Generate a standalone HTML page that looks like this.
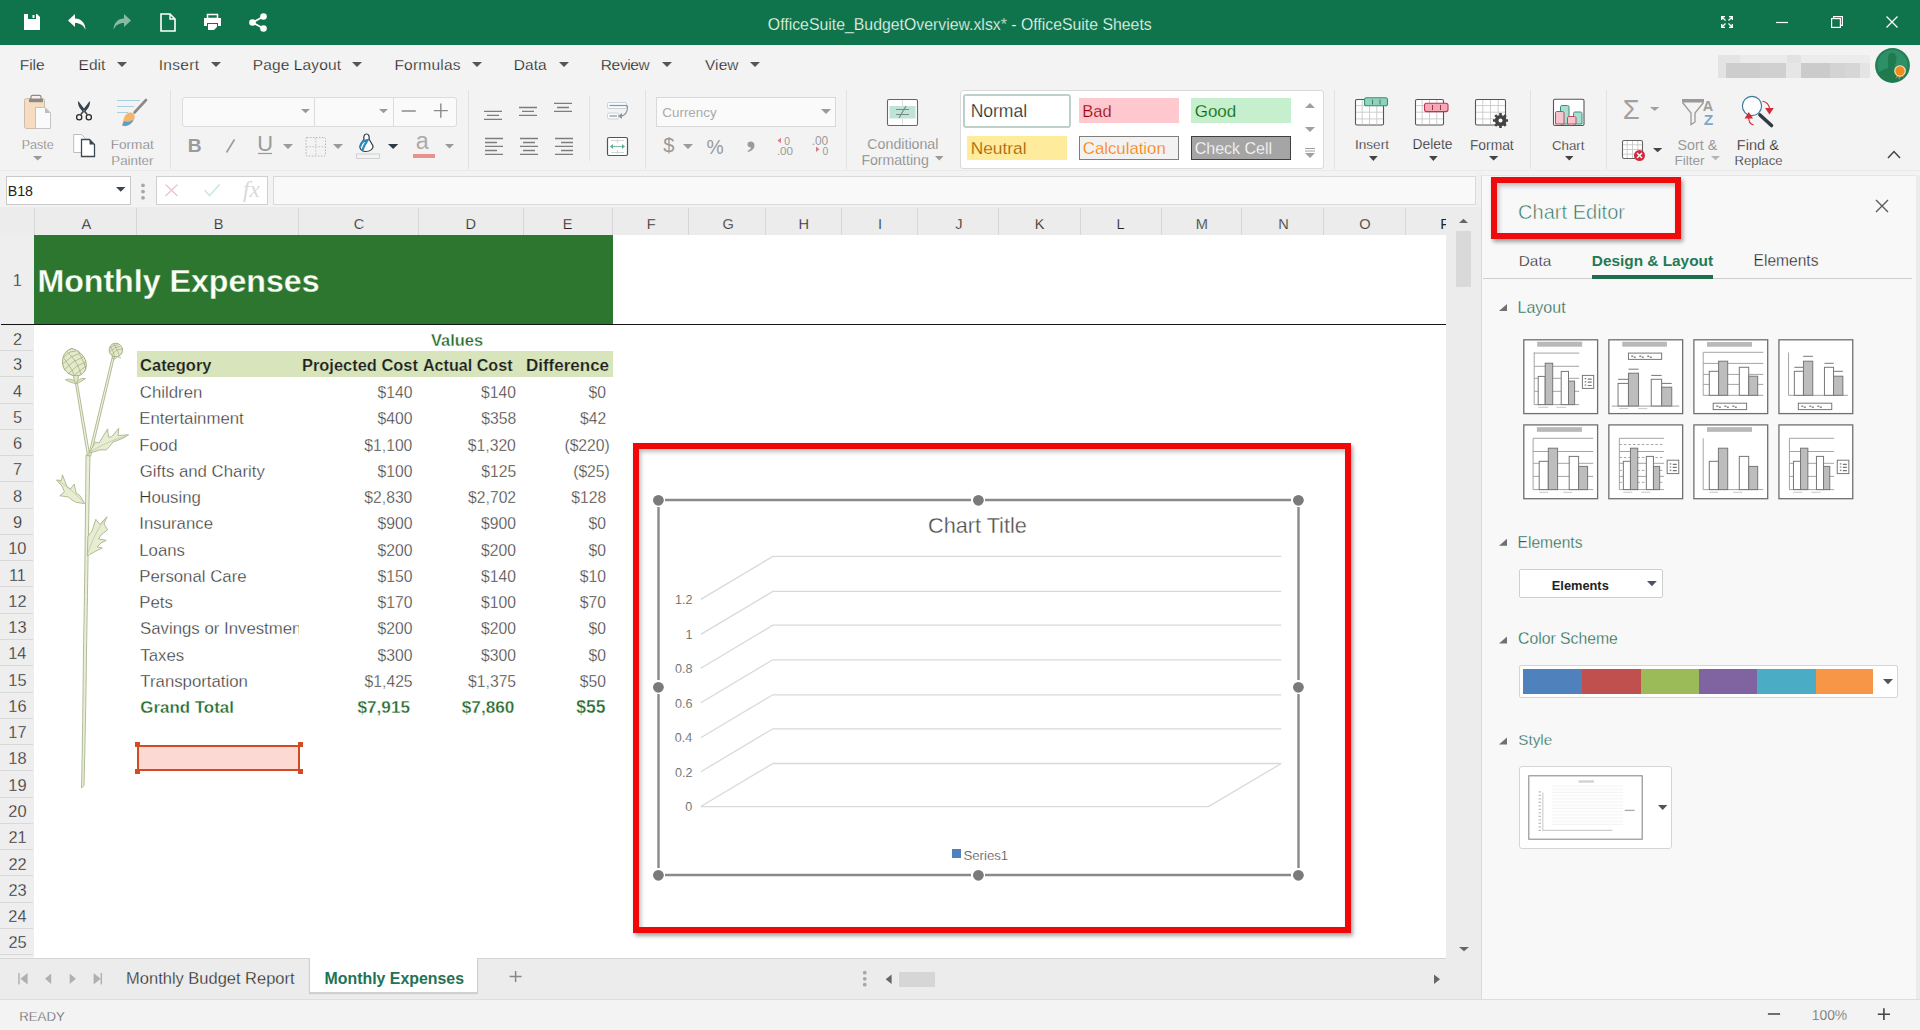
<!DOCTYPE html><html><head><meta charset="utf-8"><title>OfficeSuite Sheets</title><style>
html,body{margin:0;padding:0;width:1920px;height:1030px;overflow:hidden;background:#f3f3f3;font-family:"Liberation Sans",sans-serif;}
body>div,body>svg{position:absolute;box-sizing:border-box;}
svg{overflow:visible}
</style></head><body>
<div style="left:0px;top:0px;width:1920px;height:45px;background:#0f744b"></div>
<svg style="left:24px;top:14px;" width="16" height="16" viewBox="0 0 16 16"><path d="M0 0H13L16 3V16H0Z" fill="#ffffff"/><rect x="4" y="0" width="8" height="5" fill="#0f744b"/><rect x="8.5" y="1" width="2" height="3" fill="#ffffff"/></svg>
<svg style="left:68px;top:14px;" width="18" height="16" viewBox="0 0 18 16"><path d="M7 0L0 6.5L7 13V9C12 9 15.5 11 17.5 16C17.5 9 13 4.5 7 4.5Z" fill="#ffffff"/></svg>
<svg style="left:113px;top:14px;" width="18" height="16" viewBox="0 0 18 16"><path d="M11 0L18 6.5L11 13V9C6 9 2.5 11 0.5 16C0.5 9 5 4.5 11 4.5Z" fill="#ffffff" opacity="0.5"/></svg>
<svg style="left:160px;top:13px;" width="16" height="19" viewBox="0 0 16 19"><path d="M1 1H10L15 6V18H1Z" fill="none" stroke="#ffffff" stroke-width="1.6"/><path d="M10 1V6H15" fill="none" stroke="#ffffff" stroke-width="1.4"/></svg>
<svg style="left:204px;top:14px;" width="17" height="16" viewBox="0 0 17 16"><rect x="3.5" y="0.5" width="10" height="4" fill="none" stroke="#ffffff" stroke-width="1.5"/><path d="M0 4H17V12H14V9H3V12H0Z" fill="#ffffff"/><path d="M4 10H13V13L10 16H4Z" fill="#ffffff"/></svg>
<svg style="left:249px;top:13px;" width="18" height="19" viewBox="0 0 18 19"><circle cx="14.5" cy="3.5" r="3.3" fill="#ffffff"/><circle cx="3.5" cy="9.5" r="3.3" fill="#ffffff"/><circle cx="14.5" cy="15.5" r="3.3" fill="#ffffff"/><path d="M14.5 3.5L3.5 9.5L14.5 15.5" stroke="#ffffff" stroke-width="1.8" fill="none"/></svg>
<svg style="left:1721px;top:16px;" width="12" height="12" viewBox="0 0 12 12"><g stroke="#ffffff" stroke-width="1.3" fill="none"><path d="M0.7 4V0.7H4M0.7 0.7L4.5 4.5"/><path d="M8 0.7H11.3V4M11.3 0.7L7.5 4.5"/><path d="M0.7 8V11.3H4M0.7 11.3L4.5 7.5"/><path d="M11.3 8V11.3H8M11.3 11.3L7.5 7.5"/></g></svg>
<svg style="left:1776px;top:21px;" width="12" height="3" viewBox="0 0 12 3"><path d="M0 1.5H12" stroke="#ffffff" stroke-width="1.2"/></svg>
<svg style="left:1831px;top:16px;" width="12" height="12" viewBox="0 0 12 12"><rect x="0.6" y="2.6" width="8.8" height="8.8" fill="none" stroke="#ffffff" stroke-width="1.2"/><path d="M2.6 2.6V0.6H11.4V9.4H9.4" fill="none" stroke="#ffffff" stroke-width="1.2"/></svg>
<svg style="left:1886px;top:16px;" width="12" height="12" viewBox="0 0 12 12"><path d="M0.5 0.5L11.5 11.5M11.5 0.5L0.5 11.5" stroke="#ffffff" stroke-width="1.3"/></svg>
<svg style="left:0;top:0;pointer-events:none" width="1920" height="1030"><text x="767.86" y="29.50" style="font-size:15.843px;font-weight:400;font-style:normal;font-family:'Liberation Sans';fill:#f2fff8;white-space:pre;stroke:#0f744b;stroke-width:0.25px;">OfficeSuite_BudgetOverview.xlsx* - OfficeSuite Sheets</text></svg>
<div style="left:0px;top:45px;width:1920px;height:126px;background:#f3f3f3"></div>
<svg style="left:117px;top:62px;" width="10" height="5" viewBox="0 0 10 5"><path d="M0 0H10L5.0 5Z" fill="#555"/></svg>
<svg style="left:211px;top:62px;" width="10" height="5" viewBox="0 0 10 5"><path d="M0 0H10L5.0 5Z" fill="#555"/></svg>
<svg style="left:352px;top:62px;" width="10" height="5" viewBox="0 0 10 5"><path d="M0 0H10L5.0 5Z" fill="#555"/></svg>
<svg style="left:471.7px;top:62px;" width="10" height="5" viewBox="0 0 10 5"><path d="M0 0H10L5.0 5Z" fill="#555"/></svg>
<svg style="left:558.7px;top:62px;" width="10" height="5" viewBox="0 0 10 5"><path d="M0 0H10L5.0 5Z" fill="#555"/></svg>
<svg style="left:662px;top:62px;" width="10" height="5" viewBox="0 0 10 5"><path d="M0 0H10L5.0 5Z" fill="#555"/></svg>
<svg style="left:750px;top:62px;" width="10" height="5" viewBox="0 0 10 5"><path d="M0 0H10L5.0 5Z" fill="#555"/></svg>
<div style="left:1718px;top:55px;width:152px;height:23px;background:#ececec"></div>
<div style="left:1718px;top:55px;width:22px;height:8px;background:#e4e4e4"></div>
<div style="left:1740px;top:55px;width:46px;height:8px;background:#ebebeb"></div>
<div style="left:1786.5px;top:55px;width:14.5px;height:8px;background:#e2e2e2"></div>
<div style="left:1801px;top:55px;width:59px;height:8px;background:#ececec"></div>
<div style="left:1718px;top:63px;width:8px;height:15px;background:#e3e3e3"></div>
<div style="left:1726px;top:63px;width:34px;height:15px;background:#cdcdcd"></div>
<div style="left:1760px;top:63px;width:26px;height:15px;background:#d0d0d0"></div>
<div style="left:1786px;top:63px;width:15px;height:15px;background:#e6e6e6"></div>
<div style="left:1801px;top:63px;width:29px;height:15px;background:#cbcbcb"></div>
<div style="left:1830px;top:63px;width:15px;height:15px;background:#d3d3d3"></div>
<div style="left:1845px;top:63px;width:15px;height:15px;background:#d6d6d6"></div>
<div style="left:1860px;top:63px;width:10px;height:15px;background:#e4e4e4"></div>
<svg style="left:1875px;top:48px;" width="35" height="35" viewBox="0 0 35 35"><circle cx="17.5" cy="17.5" r="17.4" fill="#237d55"/><circle cx="17.5" cy="17" r="15" fill="#2f9068"/><path d="M3 26C6 22 10 21 13 20C13.5 16 12.5 12 13 9C13.5 6 15.5 4.5 17.5 4.8C20 5 21.5 7.5 21.5 10.5C21.5 14 20 17 19 20C21 21 23 22 25 24L22 33C18 35 8 34 3 26Z" fill="#1f7a50"/><path d="M20.5 31L22.5 25.5L24.5 32L26 26L28.5 30.5L27.5 24Z" fill="#e07b2a"/><circle cx="25" cy="23" r="5.8" fill="#fbe6c4"/><circle cx="25" cy="23" r="4.7" fill="#f08a1f"/></svg>
<svg style="left:0;top:0;pointer-events:none" width="1920" height="1030"><text x="19.79" y="69.80" style="font-size:15.500px;font-weight:400;font-style:normal;font-family:'Liberation Sans';fill:#1c1c1c;white-space:pre;letter-spacing:-0.045px;stroke:#f3f3f3;stroke-width:0.25px;">File</text><text x="78.59" y="69.80" style="font-size:15.500px;font-weight:400;font-style:normal;font-family:'Liberation Sans';fill:#1c1c1c;white-space:pre;letter-spacing:0.016px;stroke:#f3f3f3;stroke-width:0.25px;">Edit</text><text x="158.79" y="69.80" style="font-size:15.500px;font-weight:400;font-style:normal;font-family:'Liberation Sans';fill:#1c1c1c;white-space:pre;letter-spacing:0.279px;stroke:#f3f3f3;stroke-width:0.25px;">Insert</text><text x="252.79" y="69.80" style="font-size:15.500px;font-weight:400;font-style:normal;font-family:'Liberation Sans';fill:#1c1c1c;white-space:pre;letter-spacing:0.111px;stroke:#f3f3f3;stroke-width:0.25px;">Page Layout</text><text x="394.39" y="69.80" style="font-size:15.500px;font-weight:400;font-style:normal;font-family:'Liberation Sans';fill:#1c1c1c;white-space:pre;letter-spacing:0.214px;stroke:#f3f3f3;stroke-width:0.25px;">Formulas</text><text x="513.79" y="69.80" style="font-size:15.500px;font-weight:400;font-style:normal;font-family:'Liberation Sans';fill:#1c1c1c;white-space:pre;letter-spacing:0.024px;stroke:#f3f3f3;stroke-width:0.25px;">Data</text><text x="600.79" y="69.80" style="font-size:15.500px;font-weight:400;font-style:normal;font-family:'Liberation Sans';fill:#1c1c1c;white-space:pre;letter-spacing:-0.360px;stroke:#f3f3f3;stroke-width:0.25px;">Review</text><text x="705.00" y="69.80" style="font-size:15.500px;font-weight:400;font-style:normal;font-family:'Liberation Sans';fill:#1c1c1c;white-space:pre;letter-spacing:0.065px;stroke:#f3f3f3;stroke-width:0.25px;">View</text></svg>
<div style="left:0px;top:170.3px;width:1920px;height:1px;background:#eaeaea"></div>
<div style="left:170.0px;top:90px;width:1px;height:79px;background:#e2e2e2"></div>
<div style="left:468.0px;top:90px;width:1px;height:79px;background:#e2e2e2"></div>
<div style="left:589.0px;top:96px;width:1px;height:65px;background:#e2e2e2"></div>
<div style="left:645.0px;top:90px;width:1px;height:79px;background:#e2e2e2"></div>
<div style="left:845.5px;top:90px;width:1px;height:79px;background:#e2e2e2"></div>
<div style="left:1333.5px;top:90px;width:1px;height:79px;background:#e2e2e2"></div>
<div style="left:1530.0px;top:90px;width:1px;height:79px;background:#e2e2e2"></div>
<div style="left:1605.5px;top:90px;width:1px;height:79px;background:#e2e2e2"></div>
<svg style="left:0px;top:0px;" width="1" height="1" viewBox="0 0 1 1">
<rect x="24.5" y="98.5" width="20" height="30" rx="2" fill="#f6dcc0" stroke="#cdbca9" stroke-width="1"/>
<rect x="31" y="95.3" width="10" height="5" rx="1.5" fill="none" stroke="#8a8a8a" stroke-width="1.2"/>
<rect x="29" y="99" width="14" height="3.2" fill="#8a8a8a"/>
<path d="M35.5 107.5H45L50.5 113V128.5H35.5Z" fill="#fafafa" stroke="#c4c4c4" stroke-width="1"/>
<path d="M45 107.5V113H50.5Z" fill="#bdbdbd"/>
</svg>
<svg style="left:33.4px;top:156px;" width="9.4" height="4.5" viewBox="0 0 9.4 4.5"><path d="M0 0H9.4L4.7 4.5Z" fill="#9a9a9a"/></svg>
<svg style="left:0px;top:0px;" width="1" height="1" viewBox="0 0 1 1">
<path d="M78.3 101C77.3 104.5 79.5 108.5 83.3 112L85.2 110C82.8 107 80.5 104 78.3 101Z" fill="#34434d"/>
<path d="M89.7 101C90.7 104.5 88.5 108.5 84.7 112L82.8 110C85.2 107 87.5 104 89.7 101Z" fill="#34434d"/>
<rect x="82.3" y="109" width="3.4" height="3.4" fill="#34434d"/><rect x="83.3" y="110" width="1.4" height="1.4" fill="#7a8890"/>
<path d="M82.8 112L80.8 114.5M85.2 112L87.2 114.5" stroke="#34434d" stroke-width="1.5"/>
<circle cx="79.2" cy="117.2" r="2.6" fill="none" stroke="#2b2b2b" stroke-width="1.3"/>
<circle cx="88.8" cy="117.2" r="2.6" fill="none" stroke="#2b2b2b" stroke-width="1.3"/>
</svg>
<svg style="left:0px;top:0px;" width="1" height="1" viewBox="0 0 1 1">
<path d="M73.7 134.5H81.5L85.5 138.5V152.5H73.7Z" fill="#fff" stroke="#bdbdbd" stroke-width="1"/>
<path d="M81.5 139.5H89.5L94.5 144.5V156.5H81.5Z" fill="#fff" stroke="#3d4a55" stroke-width="1.3"/>
<path d="M89.5 139.5V144.5H94.5Z" fill="#3d4a55"/>
</svg>
<svg style="left:0px;top:0px;" width="1" height="1" viewBox="0 0 1 1">
<path d="M117 100.5H140M117 106.5H134M117 112.5H128" stroke="#a9d0e0" stroke-width="1.2"/>
<path d="M146 100L134.5 112.5" stroke="#8a8a8a" stroke-width="2.6" stroke-linecap="round"/>
<path d="M127 113.5C131 111 136 114 134.5 118.5C132.5 124 124 126 122 125.5C123.5 122 123 117 127 113.5Z" fill="#f5b56e"/>
<path d="M122.3 125.5C124 126 131 124 133.2 120.5C132 123.5 129 125.5 125 126.3Z" fill="#5a9fc9"/>
<path d="M124 121C126 122.5 130 122 133.5 119.5C132.5 123.5 127 126 122.2 125.6C123 124 123.3 122.5 124 121Z" fill="#5a9fc9"/>
</svg>
<div style="left:182px;top:97px;width:275px;height:29.5px;background:#fafafa;border:1px solid #dcdcdc;border-radius:3px"></div>
<div style="left:313.5px;top:98px;width:1px;height:28px;background:#dcdcdc"></div>
<div style="left:392.5px;top:98px;width:1px;height:28px;background:#dcdcdc"></div>
<svg style="left:300.6px;top:109px;" width="9" height="4.3" viewBox="0 0 9 4.3"><path d="M0 0H9L4.5 4.3Z" fill="#9a9a9a"/></svg>
<svg style="left:379px;top:109px;" width="9" height="4.3" viewBox="0 0 9 4.3"><path d="M0 0H9L4.5 4.3Z" fill="#9a9a9a"/></svg>
<svg style="left:0px;top:0px;" width="1" height="1" viewBox="0 0 1 1"><path d="M401.7 111H415.8M433.8 110.6H447.8M440.8 103.6V117.7" stroke="#8a8a8a" stroke-width="1.4"/></svg>
<svg style="left:0px;top:0px;" width="1" height="1" viewBox="0 0 1 1"><path d="M234.5 139.5L226.5 152.5" stroke="#9a9a9a" stroke-width="1.6"/></svg>
<svg style="left:0px;top:0px;" width="1" height="1" viewBox="0 0 1 1"><path d="M258 153.5H272" stroke="#9a9a9a" stroke-width="1.2"/></svg>
<svg style="left:283px;top:144px;" width="10" height="5" viewBox="0 0 10 5"><path d="M0 0H10L5.0 5Z" fill="#9a9a9a"/></svg>
<svg style="left:0px;top:0px;" width="1" height="1" viewBox="0 0 1 1"><rect x="306" y="137.5" width="19.5" height="18.5" rx="1" fill="none" stroke="#b5b5b5" stroke-width="1" stroke-dasharray="1.5 1.5"/><path d="M315.75 138V155.5M306.5 146.75H325" stroke="#c5c5c5" stroke-width="1" stroke-dasharray="1.5 1.5"/></svg>
<svg style="left:333px;top:144px;" width="10" height="5" viewBox="0 0 10 5"><path d="M0 0H10L5.0 5Z" fill="#9a9a9a"/></svg>
<svg style="left:0px;top:0px;" width="1" height="1" viewBox="0 0 1 1">
<path d="M366.5 134C364 134 363.5 137 364 139L360 146C359.5 148 361 151.5 365.5 151.5C370 151.5 373.5 149 373 146L369 139C369.5 137 369 134 366.5 134Z" fill="#fff" stroke="#2b3a45" stroke-width="1.2"/>
<path d="M360.3 146.5C361 142.5 364 140.5 367.5 140.2C366 142.5 364 146 362 151" stroke="#2a8ab8" stroke-width="2.2" fill="none"/>
<rect x="356.5" y="154" width="23" height="4.5" fill="none" stroke="#cfcfcf" stroke-width="1"/>
</svg>
<svg style="left:387.7px;top:144px;" width="10.3" height="5" viewBox="0 0 10.3 5"><path d="M0 0H10.3L5.15 5Z" fill="#2b3a45"/></svg>
<div style="left:412.7px;top:154px;width:22.3px;height:4px;background:#e8928e"></div>
<svg style="left:444.7px;top:144px;" width="9" height="4.5" viewBox="0 0 9 4.5"><path d="M0 0H9L4.5 4.5Z" fill="#9a9a9a"/></svg>
<svg style="left:0px;top:0px;" width="1" height="1" viewBox="0 0 1 1"><path d="M484 111.4H502M487 115.4H499M484 119.3H502" stroke="#7d7d7d" stroke-width="1.3"/></svg>
<svg style="left:0px;top:0px;" width="1" height="1" viewBox="0 0 1 1"><path d="M519 107.5H537M522 111.4H534M519 115.4H537" stroke="#7d7d7d" stroke-width="1.3"/></svg>
<svg style="left:0px;top:0px;" width="1" height="1" viewBox="0 0 1 1"><path d="M554 103.4H572M557 107.5H569M554 111.4H572" stroke="#7d7d7d" stroke-width="1.3"/></svg>
<svg style="left:0px;top:0px;" width="1" height="1" viewBox="0 0 1 1"><path d="M485 138.5H503M485 142.5H497M485 146.3H503M485 150.5H497M485 154.4H503" stroke="#7d7d7d" stroke-width="1.3"/></svg>
<svg style="left:0px;top:0px;" width="1" height="1" viewBox="0 0 1 1"><path d="M520 138.5H538M523 142.5H535M520 146.3H538M523 150.5H535M520 154.4H538" stroke="#7d7d7d" stroke-width="1.3"/></svg>
<svg style="left:0px;top:0px;" width="1" height="1" viewBox="0 0 1 1"><path d="M555 138.5H573M561 142.5H573M555 146.3H573M561 150.5H573M555 154.4H573" stroke="#7d7d7d" stroke-width="1.3"/></svg>
<svg style="left:0px;top:0px;" width="1" height="1" viewBox="0 0 1 1">
<rect x="607.5" y="102.5" width="19" height="6" rx="1.5" fill="#fbfbfb" stroke="#c9d3da" stroke-width="1"/>
<path d="M609.5 105.5H627" stroke="#8896a0" stroke-width="1.2"/>
<rect x="607.5" y="113" width="11" height="6" rx="1.5" fill="#fbfbfb" stroke="#c9d3da" stroke-width="1"/>
<path d="M609.5 116H617" stroke="#8896a0" stroke-width="1.2"/>
<path d="M627.5 105.5C628 112 625 116 620.5 116" stroke="#8896a0" stroke-width="1.2" fill="none"/>
<path d="M618 116L622 113V119Z" fill="#8896a0"/>
<rect x="607.5" y="137.5" width="20" height="18" rx="1.5" fill="#fff" stroke="#555" stroke-width="1.2"/>
<path d="M611 140.5H624M611 152.5H624M617.5 139V143M617.5 150V154" stroke="#d0d8d4" stroke-width="1"/>
<path d="M610.5 146.5H624.5" stroke="#7fbfa8" stroke-width="1.2"/>
<path d="M610 146.5L613 144V149Z M625 146.5L622 144V149Z" fill="#6aae95"/>
</svg>
<div style="left:656px;top:97px;width:180px;height:29.7px;background:#fafafa;border:1px solid #d8d8d8"></div>
<svg style="left:821px;top:109px;" width="10" height="5" viewBox="0 0 10 5"><path d="M0 0H10L5.0 5Z" fill="#9a9a9a"/></svg>
<svg style="left:683px;top:144px;" width="10" height="5" viewBox="0 0 10 5"><path d="M0 0H10L5.0 5Z" fill="#9a9a9a"/></svg>
<svg style="left:0px;top:0px;" width="1" height="1" viewBox="0 0 1 1"><path d="M750.5 141.5C753 141.5 754.5 143 754.5 145.5C754.5 148.5 752 151 748 152L747.5 151C749.5 150 750.8 148.8 751 147.5C749 147.5 747.5 146.3 747.5 144.5C747.5 142.7 748.8 141.5 750.5 141.5Z" fill="#9a9a9a"/></svg>
<svg style="left:0px;top:0px;" width="1" height="1" viewBox="0 0 1 1"><path d="M777.5 140.5L781 137.8V143.2Z" fill="#d9798a"/><path d="M819.5 149.3L816 146.6V152Z" fill="#d9798a"/></svg>
<svg style="left:0px;top:0px;" width="1" height="1" viewBox="0 0 1 1">
<rect x="887.5" y="99.5" width="30" height="26" rx="1.5" fill="#fff" stroke="#666" stroke-width="1.1"/>
<rect x="889.5" y="106" width="26" height="12.5" fill="#bfe3d8"/>
<path d="M896 109.5H909M896 114.5H909M906 106L899 118" stroke="#7a8a86" stroke-width="1.2"/>
<path d="M902.5 100V106M902.5 118.5V125" stroke="#d6d6d6" stroke-width="0.8"/>
</svg>
<svg style="left:934.7px;top:156px;" width="8.5" height="4.5" viewBox="0 0 8.5 4.5"><path d="M0 0H8.5L4.25 4.5Z" fill="#9a9a9a"/></svg>
<div style="left:959.5px;top:90.3px;width:364px;height:79px;background:#fff;border:1px solid #dadada;border-radius:3px"></div>
<div style="left:963px;top:93.5px;width:108.4px;height:34px;background:#fff;border:2.5px solid #bcd2c8;border-radius:3px"></div>
<div style="left:1079px;top:98px;width:100px;height:24.5px;background:#ffc7ce"></div>
<div style="left:1191px;top:98px;width:100px;height:24.5px;background:#c6efce"></div>
<div style="left:967px;top:135.5px;width:99.8px;height:24.5px;background:#ffeb9c"></div>
<div style="left:1079px;top:135.5px;width:100px;height:24.5px;background:#f2f2f2;border:1px solid #7f7f7f"></div>
<div style="left:1191px;top:135.5px;width:100px;height:24.5px;background:#a5a5a5;border:1.5px solid #3f3f3f"></div>
<svg style="left:0px;top:0px;" width="1" height="1" viewBox="0 0 1 1"><path d="M1305 108H1315L1310 103Z" fill="#a0a0a0"/><path d="M1305 127H1315L1310 132Z" fill="#a0a0a0"/><path d="M1305 148.5H1315M1305 151H1315" stroke="#a0a0a0" stroke-width="1"/><path d="M1305 153H1315L1310 158Z" fill="#a0a0a0"/></svg>
<svg style="left:0px;top:0px;" width="1" height="1" viewBox="0 0 1 1"><rect x="1355.5" y="99.5" width="28" height="25.5" rx="1.5" fill="#fff" stroke="#555" stroke-width="1.1"/><path d="M1362.2 100V124.5M1369.5 100V124.5M1376.8 100V124.5M1356 105.6H1383M1356 112.2H1383M1356 118.9H1383" stroke="#c8c8c8" stroke-width="0.9"/><rect x="1364.5" y="97.8" width="23" height="8" rx="2" fill="#8fd3bf" stroke="#3b8f73" stroke-width="1.1"/><path d="M1372.5 99.5V104.5M1380 99.5V104.5" stroke="#3b6f5f" stroke-width="0.9"/></svg>
<svg style="left:1369px;top:155.9px;" width="8.7" height="4.9" viewBox="0 0 8.7 4.9"><path d="M0 0H8.7L4.35 4.9Z" fill="#444"/></svg>
<svg style="left:0px;top:0px;" width="1" height="1" viewBox="0 0 1 1"><rect x="1415.5" y="99.5" width="28" height="25.5" rx="1.5" fill="#fff" stroke="#555" stroke-width="1.1"/><path d="M1422.2 100V124.5M1429.5 100V124.5M1436.8 100V124.5M1416 105.6H1443M1416 112.2H1443M1416 118.9H1443" stroke="#c8c8c8" stroke-width="0.9"/><rect x="1424.5" y="103.3" width="23.5" height="8.3" rx="2" fill="#f5a9b6" stroke="#c2324a" stroke-width="1.1"/><path d="M1432.5 105V110M1440.5 105V110" stroke="#8a3040" stroke-width="0.9"/></svg>
<svg style="left:1428.5px;top:155.9px;" width="8.7" height="4.9" viewBox="0 0 8.7 4.9"><path d="M0 0H8.7L4.35 4.9Z" fill="#444"/></svg>
<svg style="left:0px;top:0px;" width="1" height="1" viewBox="0 0 1 1"><rect x="1475.5" y="99.5" width="30" height="25.5" rx="1.5" fill="#fff" stroke="#555" stroke-width="1.1"/><path d="M1482.8 100V124.5M1490.5 100V124.5M1498.2 100V124.5M1476 105.6H1505M1476 112.2H1505M1476 118.9H1505" stroke="#c8c8c8" stroke-width="0.9"/>
<g transform="translate(1500.5 120.5)"><circle r="5.6" fill="#444"/><circle r="2" fill="#fff"/>
<path d="M0 -7.5V7.5M-7.5 0H7.5M-5.3 -5.3L5.3 5.3M5.3 -5.3L-5.3 5.3" stroke="#444" stroke-width="2.6"/><circle r="2" fill="#fff"/></g></svg>
<svg style="left:1488.75px;top:156px;" width="9.3" height="4.5" viewBox="0 0 9.3 4.5"><path d="M0 0H9.3L4.65 4.5Z" fill="#444"/></svg>
<svg style="left:0px;top:0px;" width="1" height="1" viewBox="0 0 1 1">
<rect x="1553.5" y="99.2" width="30.5" height="26.3" rx="1.5" fill="#fff" stroke="#555" stroke-width="1.1"/>
<path d="M1560.5 124V107C1560.5 106 1561 105.5 1562 105.5H1567.5C1568.5 105.5 1569 106 1569 107V124Z" fill="#a9dfd2" stroke="#3c8f77" stroke-width="1"/>
<path d="M1555.5 124V113C1555.5 112 1556 111.5 1557 111.5H1562.5C1563.5 111.5 1564 112 1564 113V124Z" fill="#f7c5cd" stroke="#c0485a" stroke-width="1"/>
<path d="M1573.5 124V113.5C1573.5 112.5 1574 112 1575 112H1580.5C1581.5 112 1582 112.5 1582 113.5V124Z" fill="#a9dfd2" stroke="#3c8f77" stroke-width="1"/>
<path d="M1567.5 124V118C1567.5 117 1568 116.5 1569 116.5H1574.5C1575.5 116.5 1576 117 1576 118V124Z" fill="#f7c5cd" stroke="#c0485a" stroke-width="1"/>
</svg>
<svg style="left:1564.5px;top:156px;" width="8.5" height="4.5" viewBox="0 0 8.5 4.5"><path d="M0 0H8.5L4.25 4.5Z" fill="#444"/></svg>
<svg style="left:1649.5px;top:107px;" width="9.3" height="4" viewBox="0 0 9.3 4"><path d="M0 0H9.3L4.65 4Z" fill="#a0a0a0"/></svg>
<svg style="left:0px;top:0px;" width="1" height="1" viewBox="0 0 1 1"><rect x="1622.5" y="140.5" width="20" height="18" rx="1.5" fill="#fff" stroke="#666" stroke-width="1.1"/><path d="M1627.2 141V158M1632.5 141V158M1637.8 141V158M1623 144.8H1642M1623 149.5H1642M1623 154.2H1642" stroke="#c8c8c8" stroke-width="0.9"/><circle cx="1639.5" cy="155.5" r="5.5" fill="#d22a3f"/><path d="M1637 153L1642 158M1642 153L1637 158" stroke="#fff" stroke-width="1.4"/></svg>
<svg style="left:1652.5px;top:147.5px;" width="9.3" height="4.3" viewBox="0 0 9.3 4.3"><path d="M0 0H9.3L4.65 4.3Z" fill="#444"/></svg>
<svg style="left:0px;top:0px;" width="1" height="1" viewBox="0 0 1 1">
<rect x="1682" y="99" width="22" height="3.5" fill="#9a9a9a"/>
<path d="M1682.5 102.5L1691 113V124.5L1695 122V113L1703.5 102.5" fill="none" stroke="#9a9a9a" stroke-width="1.3"/>
</svg>
<svg style="left:1710.5px;top:156px;" width="9" height="4.3" viewBox="0 0 9 4.3"><path d="M0 0H9L4.5 4.3Z" fill="#b5b5b5"/></svg>
<svg style="left:0px;top:0px;" width="1" height="1" viewBox="0 0 1 1">
<circle cx="1752" cy="106" r="9.6" fill="#fbfdfe" stroke="#3a7596" stroke-width="1.1"/>
<path d="M1760 115L1771.5 125.5" stroke="#2f3a42" stroke-width="3.6" stroke-linecap="round"/>
<path d="M1753.5 125C1750 124 1748.5 121.5 1748.8 117.5" fill="none" stroke="#d42a3a" stroke-width="1.1"/>
<path d="M1744.5 118.5L1748.8 112L1753 118.5Z" fill="#d42a3a"/>
<path d="M1762.5 101.2C1766.5 102 1769 104.5 1769.5 108.5" fill="none" stroke="#d42a3a" stroke-width="1.1"/>
<path d="M1765 108L1769.5 114.5L1773.8 108Z" fill="#d42a3a"/>
</svg>
<svg style="left:0px;top:0px;" width="1" height="1" viewBox="0 0 1 1"><path d="M1888 158L1894 151.5L1900 158" fill="none" stroke="#444" stroke-width="1.5"/></svg>
<svg style="left:0;top:0;pointer-events:none" width="1920" height="1030"><text x="21.72" y="148.80" style="font-size:12.549px;font-weight:400;font-style:normal;font-family:'Liberation Sans';fill:#7a7a7a;white-space:pre;stroke:#f3f3f3;stroke-width:0.25px;">Paste</text><text x="110.74" y="148.80" style="font-size:13.582px;font-weight:400;font-style:normal;font-family:'Liberation Sans';fill:#7a7a7a;white-space:pre;stroke:#f3f3f3;stroke-width:0.25px;">Format</text><text x="111.26" y="164.50" style="font-size:13.321px;font-weight:400;font-style:normal;font-family:'Liberation Sans';fill:#7a7a7a;white-space:pre;stroke:#f3f3f3;stroke-width:0.25px;">Painter</text><text x="187.80" y="152.40" style="font-size:19.200px;font-weight:700;font-style:normal;font-family:'Liberation Sans';fill:#9a9a9a;white-space:pre;">B</text><text x="257.13" y="151.00" style="font-size:21.895px;font-weight:400;font-style:normal;font-family:'Liberation Sans';fill:#9a9a9a;white-space:pre;">U</text><text x="415.87" y="149.00" style="font-size:23.341px;font-weight:400;font-style:normal;font-family:'Liberation Sans';fill:#ababab;white-space:pre;">a</text><text x="662.37" y="117.00" style="font-size:13.392px;font-weight:400;font-style:normal;font-family:'Liberation Sans';fill:#ababab;white-space:pre;">Currency</text><text x="663.30" y="152.00" style="font-size:20.114px;font-weight:400;font-style:normal;font-family:'Liberation Sans';fill:#9a9a9a;white-space:pre;">$</text><text x="706.40" y="153.50" style="font-size:19.321px;font-weight:400;font-style:normal;font-family:'Liberation Sans';fill:#9a9a9a;white-space:pre;">%</text><text x="784.17" y="144.50" style="font-size:10.400px;font-weight:400;font-style:normal;font-family:'Liberation Sans';fill:#9a9a9a;white-space:pre;">0</text><text x="776.89" y="155.00" style="font-size:11.654px;font-weight:400;font-style:normal;font-family:'Liberation Sans';fill:#9a9a9a;white-space:pre;">.00</text><text x="811.67" y="144.50" style="font-size:11.887px;font-weight:400;font-style:normal;font-family:'Liberation Sans';fill:#9a9a9a;white-space:pre;">.00</text><text x="822.47" y="155.00" style="font-size:10.400px;font-weight:400;font-style:normal;font-family:'Liberation Sans';fill:#9a9a9a;white-space:pre;">0</text><text x="867.33" y="149.00" style="font-size:14.211px;font-weight:400;font-style:normal;font-family:'Liberation Sans';fill:#7a7a7a;white-space:pre;stroke:#f3f3f3;stroke-width:0.25px;">Conditional</text><text x="861.40" y="164.70" style="font-size:14.101px;font-weight:400;font-style:normal;font-family:'Liberation Sans';fill:#7a7a7a;white-space:pre;stroke:#f3f3f3;stroke-width:0.25px;">Formatting</text><text x="970.63" y="116.60" style="font-size:17.540px;font-weight:400;font-style:normal;font-family:'Liberation Sans';fill:#1e1e1e;white-space:pre;stroke:#fff;stroke-width:0.25px;">Normal</text><text x="1082.31" y="116.60" style="font-size:16.535px;font-weight:400;font-style:normal;font-family:'Liberation Sans';fill:#9c0006;white-space:pre;stroke:#ffc7ce;stroke-width:0.25px;">Bad</text><text x="1194.70" y="116.60" style="font-size:16.985px;font-weight:400;font-style:normal;font-family:'Liberation Sans';fill:#006100;white-space:pre;stroke:#c6efce;stroke-width:0.25px;">Good</text><text x="970.65" y="153.70" style="font-size:17.340px;font-weight:400;font-style:normal;font-family:'Liberation Sans';fill:#9c5700;white-space:pre;stroke:#ffeb9c;stroke-width:0.25px;">Neutral</text><text x="1082.81" y="153.70" style="font-size:16.783px;font-weight:400;font-style:normal;font-family:'Liberation Sans';fill:#fa7d00;white-space:pre;stroke:#f2f2f2;stroke-width:0.25px;">Calculation</text><text x="1194.75" y="153.70" style="font-size:16.010px;font-weight:400;font-style:normal;font-family:'Liberation Sans';fill:#ffffff;white-space:pre;stroke:#a5a5a5;stroke-width:0.25px;">Check Cell</text><text x="1354.94" y="149.00" style="font-size:13.601px;font-weight:400;font-style:normal;font-family:'Liberation Sans';fill:#1e1e1e;white-space:pre;stroke:#f3f3f3;stroke-width:0.25px;">Insert</text><text x="1412.62" y="149.00" style="font-size:13.817px;font-weight:400;font-style:normal;font-family:'Liberation Sans';fill:#1e1e1e;white-space:pre;stroke:#f3f3f3;stroke-width:0.25px;">Delete</text><text x="1469.92" y="149.50" style="font-size:13.825px;font-weight:400;font-style:normal;font-family:'Liberation Sans';fill:#1e1e1e;white-space:pre;stroke:#f3f3f3;stroke-width:0.25px;">Format</text><text x="1551.88" y="149.50" style="font-size:13.323px;font-weight:400;font-style:normal;font-family:'Liberation Sans';fill:#1e1e1e;white-space:pre;stroke:#f3f3f3;stroke-width:0.25px;">Chart</text><text x="1622.71" y="118.75" style="font-size:27.429px;font-weight:400;font-style:normal;font-family:'Liberation Sans';fill:#a0a0a0;white-space:pre;">&#931;</text><text x="1702.77" y="110.50" style="font-size:14.545px;font-weight:700;font-style:normal;font-family:'Liberation Sans';fill:#a0a0a0;white-space:pre;">A</text><text x="1703.76" y="124.50" style="font-size:15.568px;font-weight:700;font-style:normal;font-family:'Liberation Sans';fill:#7da7cf;white-space:pre;">Z</text><text x="1677.55" y="149.50" style="font-size:14.250px;font-weight:400;font-style:normal;font-family:'Liberation Sans';fill:#9a9a9a;white-space:pre;">Sort &amp;</text><text x="1674.44" y="165.00" style="font-size:13.557px;font-weight:400;font-style:normal;font-family:'Liberation Sans';fill:#9a9a9a;white-space:pre;">Filter</text><text x="1736.86" y="149.50" style="font-size:14.547px;font-weight:400;font-style:normal;font-family:'Liberation Sans';fill:#1e1e1e;white-space:pre;stroke:#f3f3f3;stroke-width:0.25px;">Find &amp;</text><text x="1734.48" y="165.00" style="font-size:13.098px;font-weight:400;font-style:normal;font-family:'Liberation Sans';fill:#1e1e1e;white-space:pre;stroke:#f3f3f3;stroke-width:0.25px;">Replace</text></svg>
<div style="left:6px;top:175.5px;width:125px;height:29px;background:#fff;border:1px solid #cacaca"></div>
<svg style="left:0px;top:0px;" width="1" height="1" viewBox="0 0 1 1"><path d="M116 187H125.5L120.75 191.8Z" fill="#3c4650"/></svg>
<svg style="left:0px;top:0px;" width="1" height="1" viewBox="0 0 1 1"><circle cx="143" cy="185.3" r="1.9" fill="#a8a8a8"/><circle cx="143" cy="191.6" r="1.9" fill="#a8a8a8"/><circle cx="143" cy="197.8" r="1.9" fill="#a8a8a8"/></svg>
<div style="left:156px;top:175.5px;width:112px;height:29px;background:#fff;border:1px solid #cfcfcf"></div>
<svg style="left:0px;top:0px;" width="1" height="1" viewBox="0 0 1 1"><path d="M165.5 184.5L177.5 196M177.5 184.5L165.5 196" stroke="#efc3ca" stroke-width="1.3"/><path d="M204.5 190L209.5 195.8L219.5 184.5" fill="none" stroke="#c9e5d9" stroke-width="1.4"/></svg>
<div style="left:273px;top:175.5px;width:1203px;height:29px;background:#f9f9f9;border:1px solid #d9d9d9"></div>
<div style="left:1476px;top:171px;width:5.5px;height:36px;background:#f0f0f0"></div>
<div style="left:0px;top:207px;width:1446px;height:28px;background:#ececec"></div>
<div style="left:135.75px;top:208px;width:1px;height:27px;background:#d6d6d6"></div>
<div style="left:298.25px;top:208px;width:1px;height:27px;background:#d6d6d6"></div>
<div style="left:417.9px;top:208px;width:1px;height:27px;background:#d6d6d6"></div>
<div style="left:522.5px;top:208px;width:1px;height:27px;background:#d6d6d6"></div>
<div style="left:612.3px;top:208px;width:1px;height:27px;background:#d6d6d6"></div>
<div style="left:688.0px;top:208px;width:1px;height:27px;background:#d6d6d6"></div>
<div style="left:764.9px;top:208px;width:1px;height:27px;background:#d6d6d6"></div>
<div style="left:841.2px;top:208px;width:1px;height:27px;background:#d6d6d6"></div>
<div style="left:917.0px;top:208px;width:1px;height:27px;background:#d6d6d6"></div>
<div style="left:998.25px;top:208px;width:1px;height:27px;background:#d6d6d6"></div>
<div style="left:1080.3px;top:208px;width:1px;height:27px;background:#d6d6d6"></div>
<div style="left:1160.5px;top:208px;width:1px;height:27px;background:#d6d6d6"></div>
<div style="left:1241.2px;top:208px;width:1px;height:27px;background:#d6d6d6"></div>
<div style="left:1323.25px;top:208px;width:1px;height:27px;background:#d6d6d6"></div>
<div style="left:1404.5px;top:208px;width:1px;height:27px;background:#d6d6d6"></div>
<div style="left:1489.5px;top:208px;width:1px;height:27px;background:#d6d6d6"></div>
<div style="left:33.5px;top:208px;width:1px;height:27px;background:#d6d6d6"></div>
<div style="left:0px;top:234.5px;width:1446px;height:1px;background:#dcdcdc"></div>
<svg style="left:0;top:0;pointer-events:none" width="1920" height="1030"><text x="7.69" y="195.80" style="font-size:14.211px;font-weight:400;font-style:normal;font-family:'Liberation Sans';fill:#222;white-space:pre;">B18</text><text x="243.00" y="196.50" style="font-size:23.066px;font-weight:400;font-style:italic;font-family:'Liberation Serif';fill:#d9d9d9;white-space:pre;">fx</text><text x="1440.37" y="228.50" style="font-size:14.600px;font-weight:400;font-style:normal;font-family:'Liberation Sans';fill:#222;white-space:pre;">P</text><text x="81.60" y="228.50" style="font-size:14.600px;font-weight:400;font-style:normal;font-family:'Liberation Sans';fill:#222;white-space:pre;stroke:#ececec;stroke-width:0.25px;">A</text><text x="213.87" y="228.50" style="font-size:14.600px;font-weight:400;font-style:normal;font-family:'Liberation Sans';fill:#222;white-space:pre;stroke:#ececec;stroke-width:0.25px;">B</text><text x="353.64" y="228.50" style="font-size:14.600px;font-weight:400;font-style:normal;font-family:'Liberation Sans';fill:#222;white-space:pre;stroke:#ececec;stroke-width:0.25px;">C</text><text x="465.41" y="228.50" style="font-size:14.600px;font-weight:400;font-style:normal;font-family:'Liberation Sans';fill:#222;white-space:pre;stroke:#ececec;stroke-width:0.25px;">D</text><text x="562.87" y="228.50" style="font-size:14.600px;font-weight:400;font-style:normal;font-family:'Liberation Sans';fill:#222;white-space:pre;stroke:#ececec;stroke-width:0.25px;">E</text><text x="646.71" y="228.50" style="font-size:14.600px;font-weight:400;font-style:normal;font-family:'Liberation Sans';fill:#222;white-space:pre;stroke:#ececec;stroke-width:0.25px;">F</text><text x="722.52" y="228.50" style="font-size:14.600px;font-weight:400;font-style:normal;font-family:'Liberation Sans';fill:#222;white-space:pre;stroke:#ececec;stroke-width:0.25px;">G</text><text x="798.55" y="228.50" style="font-size:14.600px;font-weight:400;font-style:normal;font-family:'Liberation Sans';fill:#222;white-space:pre;stroke:#ececec;stroke-width:0.25px;">H</text><text x="878.06" y="228.50" style="font-size:14.600px;font-weight:400;font-style:normal;font-family:'Liberation Sans';fill:#222;white-space:pre;stroke:#ececec;stroke-width:0.25px;">I</text><text x="955.19" y="228.50" style="font-size:14.600px;font-weight:400;font-style:normal;font-family:'Liberation Sans';fill:#222;white-space:pre;stroke:#ececec;stroke-width:0.25px;">J</text><text x="1034.64" y="228.50" style="font-size:14.600px;font-weight:400;font-style:normal;font-family:'Liberation Sans';fill:#222;white-space:pre;stroke:#ececec;stroke-width:0.25px;">K</text><text x="1116.55" y="228.50" style="font-size:14.600px;font-weight:400;font-style:normal;font-family:'Liberation Sans';fill:#222;white-space:pre;stroke:#ececec;stroke-width:0.25px;">L</text><text x="1195.84" y="228.50" style="font-size:14.600px;font-weight:400;font-style:normal;font-family:'Liberation Sans';fill:#222;white-space:pre;stroke:#ececec;stroke-width:0.25px;">M</text><text x="1278.25" y="228.50" style="font-size:14.600px;font-weight:400;font-style:normal;font-family:'Liberation Sans';fill:#222;white-space:pre;stroke:#ececec;stroke-width:0.25px;">N</text><text x="1359.30" y="228.50" style="font-size:14.600px;font-weight:400;font-style:normal;font-family:'Liberation Sans';fill:#222;white-space:pre;stroke:#ececec;stroke-width:0.25px;">O</text></svg>
<div style="left:0px;top:235px;width:34px;height:722px;background:#eeeeee"></div>
<div style="left:33.5px;top:235px;width:1px;height:722px;background:#d8d8d8"></div>
<div style="left:34px;top:235px;width:1412px;height:722px;background:#ffffff"></div>
<div style="left:0px;top:350.0px;width:33px;height:1px;background:#d9d9d9"></div>
<div style="left:0px;top:376.0px;width:33px;height:1px;background:#d9d9d9"></div>
<div style="left:0px;top:402.5px;width:33px;height:1px;background:#d9d9d9"></div>
<div style="left:0px;top:428.5px;width:33px;height:1px;background:#d9d9d9"></div>
<div style="left:0px;top:455.0px;width:33px;height:1px;background:#d9d9d9"></div>
<div style="left:0px;top:481.0px;width:33px;height:1px;background:#d9d9d9"></div>
<div style="left:0px;top:507.5px;width:33px;height:1px;background:#d9d9d9"></div>
<div style="left:0px;top:533.5px;width:33px;height:1px;background:#d9d9d9"></div>
<div style="left:0px;top:560.0px;width:33px;height:1px;background:#d9d9d9"></div>
<div style="left:0px;top:586.0px;width:33px;height:1px;background:#d9d9d9"></div>
<div style="left:0px;top:612.5px;width:33px;height:1px;background:#d9d9d9"></div>
<div style="left:0px;top:639.0px;width:33px;height:1px;background:#d9d9d9"></div>
<div style="left:0px;top:665.0px;width:33px;height:1px;background:#d9d9d9"></div>
<div style="left:0px;top:691.5px;width:33px;height:1px;background:#d9d9d9"></div>
<div style="left:0px;top:717.5px;width:33px;height:1px;background:#d9d9d9"></div>
<div style="left:0px;top:744.0px;width:33px;height:1px;background:#d9d9d9"></div>
<div style="left:0px;top:770.0px;width:33px;height:1px;background:#d9d9d9"></div>
<div style="left:0px;top:796.5px;width:33px;height:1px;background:#d9d9d9"></div>
<div style="left:0px;top:822.5px;width:33px;height:1px;background:#d9d9d9"></div>
<div style="left:0px;top:849.0px;width:33px;height:1px;background:#d9d9d9"></div>
<div style="left:0px;top:875.0px;width:33px;height:1px;background:#d9d9d9"></div>
<div style="left:0px;top:901.5px;width:33px;height:1px;background:#d9d9d9"></div>
<div style="left:0px;top:927.5px;width:33px;height:1px;background:#d9d9d9"></div>
<div style="left:0px;top:954.0px;width:33px;height:1px;background:#d9d9d9"></div>
<div style="left:0px;top:211.5px;width:33.5px;height:0px;"></div>
<svg style="left:0;top:0;pointer-events:none" width="1920" height="1030"><text x="12.99" y="345.10" style="font-size:16.400px;font-weight:400;font-style:normal;font-family:'Liberation Sans';fill:#222;white-space:pre;stroke:#eeeeee;stroke-width:0.3px;">2</text><text x="13.12" y="370.40" style="font-size:16.400px;font-weight:400;font-style:normal;font-family:'Liberation Sans';fill:#222;white-space:pre;stroke:#eeeeee;stroke-width:0.3px;">3</text><text x="13.12" y="396.67" style="font-size:16.400px;font-weight:400;font-style:normal;font-family:'Liberation Sans';fill:#222;white-space:pre;stroke:#eeeeee;stroke-width:0.3px;">4</text><text x="13.12" y="422.94" style="font-size:16.400px;font-weight:400;font-style:normal;font-family:'Liberation Sans';fill:#222;white-space:pre;stroke:#eeeeee;stroke-width:0.3px;">5</text><text x="12.99" y="449.21" style="font-size:16.400px;font-weight:400;font-style:normal;font-family:'Liberation Sans';fill:#222;white-space:pre;stroke:#eeeeee;stroke-width:0.3px;">6</text><text x="12.99" y="475.48" style="font-size:16.400px;font-weight:400;font-style:normal;font-family:'Liberation Sans';fill:#222;white-space:pre;stroke:#eeeeee;stroke-width:0.3px;">7</text><text x="13.12" y="501.75" style="font-size:16.400px;font-weight:400;font-style:normal;font-family:'Liberation Sans';fill:#222;white-space:pre;stroke:#eeeeee;stroke-width:0.3px;">8</text><text x="12.99" y="528.02" style="font-size:16.400px;font-weight:400;font-style:normal;font-family:'Liberation Sans';fill:#222;white-space:pre;stroke:#eeeeee;stroke-width:0.3px;">9</text><text x="8.17" y="554.29" style="font-size:16.400px;font-weight:400;font-style:normal;font-family:'Liberation Sans';fill:#222;white-space:pre;stroke:#eeeeee;stroke-width:0.3px;">10</text><text x="8.91" y="580.56" style="font-size:16.400px;font-weight:400;font-style:normal;font-family:'Liberation Sans';fill:#222;white-space:pre;stroke:#eeeeee;stroke-width:0.3px;">11</text><text x="8.30" y="606.83" style="font-size:16.400px;font-weight:400;font-style:normal;font-family:'Liberation Sans';fill:#222;white-space:pre;stroke:#eeeeee;stroke-width:0.3px;">12</text><text x="8.30" y="633.10" style="font-size:16.400px;font-weight:400;font-style:normal;font-family:'Liberation Sans';fill:#222;white-space:pre;stroke:#eeeeee;stroke-width:0.3px;">13</text><text x="8.17" y="659.37" style="font-size:16.400px;font-weight:400;font-style:normal;font-family:'Liberation Sans';fill:#222;white-space:pre;stroke:#eeeeee;stroke-width:0.3px;">14</text><text x="8.30" y="685.64" style="font-size:16.400px;font-weight:400;font-style:normal;font-family:'Liberation Sans';fill:#222;white-space:pre;stroke:#eeeeee;stroke-width:0.3px;">15</text><text x="8.30" y="711.91" style="font-size:16.400px;font-weight:400;font-style:normal;font-family:'Liberation Sans';fill:#222;white-space:pre;stroke:#eeeeee;stroke-width:0.3px;">16</text><text x="8.30" y="738.18" style="font-size:16.400px;font-weight:400;font-style:normal;font-family:'Liberation Sans';fill:#222;white-space:pre;stroke:#eeeeee;stroke-width:0.3px;">17</text><text x="8.30" y="764.45" style="font-size:16.400px;font-weight:400;font-style:normal;font-family:'Liberation Sans';fill:#222;white-space:pre;stroke:#eeeeee;stroke-width:0.3px;">18</text><text x="8.30" y="790.72" style="font-size:16.400px;font-weight:400;font-style:normal;font-family:'Liberation Sans';fill:#222;white-space:pre;stroke:#eeeeee;stroke-width:0.3px;">19</text><text x="8.30" y="816.99" style="font-size:16.400px;font-weight:400;font-style:normal;font-family:'Liberation Sans';fill:#222;white-space:pre;stroke:#eeeeee;stroke-width:0.3px;">20</text><text x="8.43" y="843.26" style="font-size:16.400px;font-weight:400;font-style:normal;font-family:'Liberation Sans';fill:#222;white-space:pre;stroke:#eeeeee;stroke-width:0.3px;">21</text><text x="8.43" y="869.53" style="font-size:16.400px;font-weight:400;font-style:normal;font-family:'Liberation Sans';fill:#222;white-space:pre;stroke:#eeeeee;stroke-width:0.3px;">22</text><text x="8.43" y="895.80" style="font-size:16.400px;font-weight:400;font-style:normal;font-family:'Liberation Sans';fill:#222;white-space:pre;stroke:#eeeeee;stroke-width:0.3px;">23</text><text x="8.30" y="922.07" style="font-size:16.400px;font-weight:400;font-style:normal;font-family:'Liberation Sans';fill:#222;white-space:pre;stroke:#eeeeee;stroke-width:0.3px;">24</text><text x="8.43" y="948.34" style="font-size:16.400px;font-weight:400;font-style:normal;font-family:'Liberation Sans';fill:#222;white-space:pre;stroke:#eeeeee;stroke-width:0.3px;">25</text><text x="12.86" y="286.00" style="font-size:16.400px;font-weight:400;font-style:normal;font-family:'Liberation Sans';fill:#222;white-space:pre;stroke:#eeeeee;stroke-width:0.3px;">1</text></svg>
<div style="left:34px;top:235px;width:579px;height:88.6px;background:#2d7630"></div>
<div style="left:1px;top:323.5px;width:1445px;height:1.5px;background:#141414"></div>
<svg style="left:0;top:0;pointer-events:none" width="1920" height="1030"><text x="37.39" y="292.20" style="font-size:32.155px;font-weight:700;font-style:normal;font-family:'Liberation Sans';fill:#fbfff5;white-space:pre;stroke:#2d7630;stroke-width:0.3px;">Monthly Expenses</text></svg>
<svg style="left:0px;top:0px;" width="1" height="1" viewBox="0 0 1 1">
<g stroke="#a9b58a" stroke-width="0.9" fill="#e6edd3" stroke-linejoin="round">
<path d="M86 455C85.5 520 84.5 600 83.5 650C83 700 82.5 745 81.5 788L84 785.5C85 745 86 700 86.5 650C87.5 600 88.5 520 90 455Z" fill="#e9efdb"/>
<path d="M75.3 382.5L87.5 456L89.8 455.5L77.3 382.5Z" fill="#eef3e2"/>
<path d="M112.5 356L88.5 455.5L90.7 456L114.5 356.5Z" fill="#eef3e2"/>
<path d="M89.3 453.2L95.2 442L99 443L107.6 428.9L108.5 437L111.6 436.8L118.8 428.3L118 435.5L128.6 434.8L123.3 438.1L116 441L112.9 442L110 446L106.3 449.9L99.8 449.9Z"/>
<path d="M91 451.5C100 446 112 440 126 436" fill="none" stroke="#b7c29b" stroke-width="0.7"/>
<path d="M84.7 503.6L80.1 495.7L76.2 493.1L74.2 484L70.5 489L67 486.6L62.4 474.8L61.5 480.5L56.5 480L62 486L64.4 491.8L59.8 495.7L68.3 497L72 500L76.2 502.3Z"/>
<path d="M83.5 502C76 494 67 486 58 480.5" fill="none" stroke="#b7c29b" stroke-width="0.7"/>
<path d="M87.3 556L88 536.3L92 531L95.8 519.3L99.8 524.5L107 516.7L104 524L107.6 529.8L101 535L98.5 539L106.3 540.3L101 543L97.2 546.8L102.4 548.1L96 551L89.3 554.7Z"/>
<path d="M88 553C92 540 98 528 106 518" fill="none" stroke="#b7c29b" stroke-width="0.7"/>
<path d="M72 348.5C78 350 84 355 86 362C87 369 84 374 79 375.5H73C67 374 62.5 369 62.5 362C62.5 355 66.5 349.5 72 348.5Z" fill="#e3eacb" stroke="#98a474"/>
<path d="M64 357L70 352L76 351M63 364L71 357L79 353.5M64 370L73 362L83 357M68 374L77 366L86 362M74 375.5L82 369L86.5 366M67 351.5L73 358L77 364L80 371L81 375M63.5 357.5L68 364L72 370L74 375M78 351L81 357L84 363L86 369" fill="none" stroke="#a3ae80" stroke-width="0.75"/>
<path d="M73.5 375.5L74.5 383L77.5 383L78.5 375.5Z" fill="#dfe7c6"/>
<path d="M65.5 379.8C69 378.5 73 379 76 382.5C79 379 82 378 85.5 378.5C82 381 79 383 76 383.5C72 383 68.5 381.5 65.5 379.8Z" fill="#dce4c2"/>
<path d="M115.5 343.3C119.5 343.3 122.7 346.5 122.5 350.5C122.2 354 119.5 356.8 115.8 356.8C112 356.8 109.2 353.8 109.2 350C109.2 346.3 112 343.3 115.5 343.3Z" fill="#e3eacb" stroke="#98a474"/>
<path d="M110 348L114 345.5L118 345M109.5 352L114.5 348L120 346.5M111.5 355L116.5 350L122 349M114 344L116 348L118 352L119.5 356M110.5 346.5L113 351L114.5 356" fill="none" stroke="#a3ae80" stroke-width="0.7"/>
<path d="M112.5 356.5L113 359L115 359L117 356.5C118.5 357 120 357.5 121 358" fill="none"/>
</g></svg>
<div style="left:136.8px;top:351.1px;width:476.2px;height:25.5px;background:#d8e4bc"></div>
<svg style="left:0;top:0;pointer-events:none" width="1920" height="1030"><text x="431.00" y="345.60" style="font-size:16.430px;font-weight:700;font-style:normal;font-family:'Liberation Sans';fill:#236a2a;white-space:pre;stroke:#fff;stroke-width:0.35px;">Values</text><text x="140.09" y="371.40" style="font-size:16.475px;font-weight:700;font-style:normal;font-family:'Liberation Sans';fill:#1f1f1f;white-space:pre;stroke:#d8e4bc;stroke-width:0.2px;">Category</text><text x="301.97" y="371.40" style="font-size:16.453px;font-weight:700;font-style:normal;font-family:'Liberation Sans';fill:#1f1f1f;white-space:pre;stroke:#d8e4bc;stroke-width:0.2px;">Projected Cost</text><text x="422.95" y="371.40" style="font-size:16.132px;font-weight:700;font-style:normal;font-family:'Liberation Sans';fill:#1f1f1f;white-space:pre;stroke:#d8e4bc;stroke-width:0.2px;">Actual Cost</text><text x="525.94" y="371.40" style="font-size:17.009px;font-weight:700;font-style:normal;font-family:'Liberation Sans';fill:#1f1f1f;white-space:pre;stroke:#d8e4bc;stroke-width:0.2px;">Difference</text><text x="139.81" y="397.97" style="font-size:16.800px;font-weight:400;font-style:normal;font-family:'Liberation Sans';fill:#2e2e2e;white-space:pre;stroke:#ffffff;stroke-width:0.35px;">Children</text><text x="377.46" y="397.97" style="font-size:15.700px;font-weight:400;font-style:normal;font-family:'Liberation Sans';fill:#2e2e2e;white-space:pre;stroke:#ffffff;stroke-width:0.35px;">$140</text><text x="480.96" y="397.97" style="font-size:15.700px;font-weight:400;font-style:normal;font-family:'Liberation Sans';fill:#2e2e2e;white-space:pre;stroke:#ffffff;stroke-width:0.35px;">$140</text><text x="588.43" y="397.97" style="font-size:15.700px;font-weight:400;font-style:normal;font-family:'Liberation Sans';fill:#2e2e2e;white-space:pre;stroke:#ffffff;stroke-width:0.35px;">$0</text><text x="139.29" y="424.24" style="font-size:16.800px;font-weight:400;font-style:normal;font-family:'Liberation Sans';fill:#2e2e2e;white-space:pre;stroke:#ffffff;stroke-width:0.35px;">Entertainment</text><text x="377.46" y="424.24" style="font-size:15.700px;font-weight:400;font-style:normal;font-family:'Liberation Sans';fill:#2e2e2e;white-space:pre;stroke:#ffffff;stroke-width:0.35px;">$400</text><text x="481.21" y="424.24" style="font-size:15.700px;font-weight:400;font-style:normal;font-family:'Liberation Sans';fill:#2e2e2e;white-space:pre;stroke:#ffffff;stroke-width:0.35px;">$358</text><text x="579.94" y="424.24" style="font-size:15.700px;font-weight:400;font-style:normal;font-family:'Liberation Sans';fill:#2e2e2e;white-space:pre;stroke:#ffffff;stroke-width:0.35px;">$42</text><text x="139.29" y="450.51" style="font-size:16.800px;font-weight:400;font-style:normal;font-family:'Liberation Sans';fill:#2e2e2e;white-space:pre;stroke:#ffffff;stroke-width:0.35px;">Food</text><text x="364.37" y="450.51" style="font-size:15.700px;font-weight:400;font-style:normal;font-family:'Liberation Sans';fill:#2e2e2e;white-space:pre;stroke:#ffffff;stroke-width:0.35px;">$1,100</text><text x="467.87" y="450.51" style="font-size:15.700px;font-weight:400;font-style:normal;font-family:'Liberation Sans';fill:#2e2e2e;white-space:pre;stroke:#ffffff;stroke-width:0.35px;">$1,320</text><text x="564.43" y="450.51" style="font-size:15.700px;font-weight:400;font-style:normal;font-family:'Liberation Sans';fill:#2e2e2e;white-space:pre;stroke:#ffffff;stroke-width:0.35px;">($220)</text><text x="139.81" y="476.78" style="font-size:16.800px;font-weight:400;font-style:normal;font-family:'Liberation Sans';fill:#2e2e2e;white-space:pre;stroke:#ffffff;stroke-width:0.35px;">Gifts and Charity</text><text x="377.46" y="476.78" style="font-size:15.700px;font-weight:400;font-style:normal;font-family:'Liberation Sans';fill:#2e2e2e;white-space:pre;stroke:#ffffff;stroke-width:0.35px;">$100</text><text x="481.21" y="476.78" style="font-size:15.700px;font-weight:400;font-style:normal;font-family:'Liberation Sans';fill:#2e2e2e;white-space:pre;stroke:#ffffff;stroke-width:0.35px;">$125</text><text x="573.16" y="476.78" style="font-size:15.700px;font-weight:400;font-style:normal;font-family:'Liberation Sans';fill:#2e2e2e;white-space:pre;stroke:#ffffff;stroke-width:0.35px;">($25)</text><text x="139.29" y="503.05" style="font-size:16.800px;font-weight:400;font-style:normal;font-family:'Liberation Sans';fill:#2e2e2e;white-space:pre;stroke:#ffffff;stroke-width:0.35px;">Housing</text><text x="364.37" y="503.05" style="font-size:15.700px;font-weight:400;font-style:normal;font-family:'Liberation Sans';fill:#2e2e2e;white-space:pre;stroke:#ffffff;stroke-width:0.35px;">$2,830</text><text x="468.12" y="503.05" style="font-size:15.700px;font-weight:400;font-style:normal;font-family:'Liberation Sans';fill:#2e2e2e;white-space:pre;stroke:#ffffff;stroke-width:0.35px;">$2,702</text><text x="571.21" y="503.05" style="font-size:15.700px;font-weight:400;font-style:normal;font-family:'Liberation Sans';fill:#2e2e2e;white-space:pre;stroke:#ffffff;stroke-width:0.35px;">$128</text><text x="139.29" y="529.32" style="font-size:16.800px;font-weight:400;font-style:normal;font-family:'Liberation Sans';fill:#2e2e2e;white-space:pre;stroke:#ffffff;stroke-width:0.35px;">Insurance</text><text x="377.46" y="529.32" style="font-size:15.700px;font-weight:400;font-style:normal;font-family:'Liberation Sans';fill:#2e2e2e;white-space:pre;stroke:#ffffff;stroke-width:0.35px;">$900</text><text x="480.96" y="529.32" style="font-size:15.700px;font-weight:400;font-style:normal;font-family:'Liberation Sans';fill:#2e2e2e;white-space:pre;stroke:#ffffff;stroke-width:0.35px;">$900</text><text x="588.43" y="529.32" style="font-size:15.700px;font-weight:400;font-style:normal;font-family:'Liberation Sans';fill:#2e2e2e;white-space:pre;stroke:#ffffff;stroke-width:0.35px;">$0</text><text x="139.29" y="555.59" style="font-size:16.800px;font-weight:400;font-style:normal;font-family:'Liberation Sans';fill:#2e2e2e;white-space:pre;stroke:#ffffff;stroke-width:0.35px;">Loans</text><text x="377.46" y="555.59" style="font-size:15.700px;font-weight:400;font-style:normal;font-family:'Liberation Sans';fill:#2e2e2e;white-space:pre;stroke:#ffffff;stroke-width:0.35px;">$200</text><text x="480.96" y="555.59" style="font-size:15.700px;font-weight:400;font-style:normal;font-family:'Liberation Sans';fill:#2e2e2e;white-space:pre;stroke:#ffffff;stroke-width:0.35px;">$200</text><text x="588.43" y="555.59" style="font-size:15.700px;font-weight:400;font-style:normal;font-family:'Liberation Sans';fill:#2e2e2e;white-space:pre;stroke:#ffffff;stroke-width:0.35px;">$0</text><text x="139.29" y="581.86" style="font-size:16.800px;font-weight:400;font-style:normal;font-family:'Liberation Sans';fill:#2e2e2e;white-space:pre;stroke:#ffffff;stroke-width:0.35px;">Personal Care</text><text x="377.46" y="581.86" style="font-size:15.700px;font-weight:400;font-style:normal;font-family:'Liberation Sans';fill:#2e2e2e;white-space:pre;stroke:#ffffff;stroke-width:0.35px;">$150</text><text x="480.96" y="581.86" style="font-size:15.700px;font-weight:400;font-style:normal;font-family:'Liberation Sans';fill:#2e2e2e;white-space:pre;stroke:#ffffff;stroke-width:0.35px;">$140</text><text x="579.70" y="581.86" style="font-size:15.700px;font-weight:400;font-style:normal;font-family:'Liberation Sans';fill:#2e2e2e;white-space:pre;stroke:#ffffff;stroke-width:0.35px;">$10</text><text x="139.29" y="608.13" style="font-size:16.800px;font-weight:400;font-style:normal;font-family:'Liberation Sans';fill:#2e2e2e;white-space:pre;stroke:#ffffff;stroke-width:0.35px;">Pets</text><text x="377.46" y="608.13" style="font-size:15.700px;font-weight:400;font-style:normal;font-family:'Liberation Sans';fill:#2e2e2e;white-space:pre;stroke:#ffffff;stroke-width:0.35px;">$170</text><text x="480.96" y="608.13" style="font-size:15.700px;font-weight:400;font-style:normal;font-family:'Liberation Sans';fill:#2e2e2e;white-space:pre;stroke:#ffffff;stroke-width:0.35px;">$100</text><text x="579.70" y="608.13" style="font-size:15.700px;font-weight:400;font-style:normal;font-family:'Liberation Sans';fill:#2e2e2e;white-space:pre;stroke:#ffffff;stroke-width:0.35px;">$70</text><text x="140.07" y="634.40" style="font-size:16.800px;font-weight:400;font-style:normal;font-family:'Liberation Sans';fill:#2e2e2e;white-space:pre;stroke:#ffffff;stroke-width:0.35px;">Savings or Investments</text><text x="377.46" y="634.40" style="font-size:15.700px;font-weight:400;font-style:normal;font-family:'Liberation Sans';fill:#2e2e2e;white-space:pre;stroke:#ffffff;stroke-width:0.35px;">$200</text><text x="480.96" y="634.40" style="font-size:15.700px;font-weight:400;font-style:normal;font-family:'Liberation Sans';fill:#2e2e2e;white-space:pre;stroke:#ffffff;stroke-width:0.35px;">$200</text><text x="588.43" y="634.40" style="font-size:15.700px;font-weight:400;font-style:normal;font-family:'Liberation Sans';fill:#2e2e2e;white-space:pre;stroke:#ffffff;stroke-width:0.35px;">$0</text><text x="140.34" y="660.67" style="font-size:16.800px;font-weight:400;font-style:normal;font-family:'Liberation Sans';fill:#2e2e2e;white-space:pre;stroke:#ffffff;stroke-width:0.35px;">Taxes</text><text x="377.46" y="660.67" style="font-size:15.700px;font-weight:400;font-style:normal;font-family:'Liberation Sans';fill:#2e2e2e;white-space:pre;stroke:#ffffff;stroke-width:0.35px;">$300</text><text x="480.96" y="660.67" style="font-size:15.700px;font-weight:400;font-style:normal;font-family:'Liberation Sans';fill:#2e2e2e;white-space:pre;stroke:#ffffff;stroke-width:0.35px;">$300</text><text x="588.43" y="660.67" style="font-size:15.700px;font-weight:400;font-style:normal;font-family:'Liberation Sans';fill:#2e2e2e;white-space:pre;stroke:#ffffff;stroke-width:0.35px;">$0</text><text x="140.34" y="686.94" style="font-size:16.800px;font-weight:400;font-style:normal;font-family:'Liberation Sans';fill:#2e2e2e;white-space:pre;stroke:#ffffff;stroke-width:0.35px;">Transportation</text><text x="364.62" y="686.94" style="font-size:15.700px;font-weight:400;font-style:normal;font-family:'Liberation Sans';fill:#2e2e2e;white-space:pre;stroke:#ffffff;stroke-width:0.35px;">$1,425</text><text x="468.12" y="686.94" style="font-size:15.700px;font-weight:400;font-style:normal;font-family:'Liberation Sans';fill:#2e2e2e;white-space:pre;stroke:#ffffff;stroke-width:0.35px;">$1,375</text><text x="579.70" y="686.94" style="font-size:15.700px;font-weight:400;font-style:normal;font-family:'Liberation Sans';fill:#2e2e2e;white-space:pre;stroke:#ffffff;stroke-width:0.35px;">$50</text><text x="140.27" y="712.91" style="font-size:16.927px;font-weight:700;font-style:normal;font-family:'Liberation Sans';fill:#236a2a;white-space:pre;stroke:#fff;stroke-width:0.35px;">Grand Total</text><text x="357.50" y="712.91" style="font-size:17.174px;font-weight:700;font-style:normal;font-family:'Liberation Sans';fill:#236a2a;white-space:pre;stroke:#fff;stroke-width:0.35px;">$7,915</text><text x="461.75" y="712.91" style="font-size:17.230px;font-weight:700;font-style:normal;font-family:'Liberation Sans';fill:#236a2a;white-space:pre;stroke:#fff;stroke-width:0.35px;">$7,860</text><text x="576.25" y="712.91" style="font-size:17.493px;font-weight:700;font-style:normal;font-family:'Liberation Sans';fill:#236a2a;white-space:pre;stroke:#fff;stroke-width:0.35px;">$55</text></svg>
<div style="left:299px;top:614.0px;width:40px;height:24px;background:#fff"></div>
<div style="left:137.4px;top:744.7px;width:162.8px;height:26.5px;background:#fdd9d3;border:2px solid #d24b22"></div>
<div style="left:134.70000000000002px;top:742.0px;width:5.4px;height:5.4px;background:#d24b22"></div>
<div style="left:297.5px;top:742.0px;width:5.4px;height:5.4px;background:#d24b22"></div>
<div style="left:134.70000000000002px;top:768.5px;width:5.4px;height:5.4px;background:#d24b22"></div>
<div style="left:297.5px;top:768.5px;width:5.4px;height:5.4px;background:#d24b22"></div>
<div style="left:1446px;top:207px;width:35px;height:792px;background:#ececec"></div>
<svg style="left:0px;top:0px;" width="1" height="1" viewBox="0 0 1 1"><path d="M1459 223H1468L1463.5 218.8Z" fill="#666"/><path d="M1459 947H1469L1464 951.3Z" fill="#666"/></svg>
<div style="left:1456px;top:231px;width:15px;height:55.5px;background:#d9d9d9"></div>
<div style="left:633px;top:443px;width:718px;height:490px;border:6px solid #f00808;box-shadow:2px 3px 4px rgba(0,0,0,0.35), inset 2px 3px 4px rgba(0,0,0,0.25);background:#fff"></div>
<svg style="left:0px;top:0px;" width="1" height="1" viewBox="0 0 1 1">
<g stroke="#8a8a8a" stroke-width="2.4" fill="none">
<path d="M665 500H971M985 500H1291M665 875H971M985 875H1291M658.5 507V680M658.5 694V868M1298.5 507V680M1298.5 694V868"/>
</g>
<g fill="#7a7a7a">
<circle cx="658.4" cy="500.3" r="5.4"/><circle cx="978.4" cy="500.3" r="5.4"/><circle cx="1298.4" cy="500.3" r="5.4"/>
<circle cx="658.4" cy="687.3" r="5.4"/><circle cx="1298.4" cy="687.3" r="5.4"/>
<circle cx="658.4" cy="875.3" r="5.4"/><circle cx="978.4" cy="875.3" r="5.4"/><circle cx="1298.4" cy="875.3" r="5.4"/>
</g></svg>
<svg style="left:0px;top:0px;" width="1" height="1" viewBox="0 0 1 1"><path d="M700.8 599.4L772.85 556.4H1281.3M700.8 634.4L772.85 591.4H1281.3M700.8 668.2L772.85 625.2H1281.3M700.8 702.8L772.85 659.8H1281.3M700.8 737.8L772.85 694.8H1281.3M700.8 771.8L772.85 728.8H1281.3M700.8 806.5L772.85 763.5H1281.3M700.8 806.6H1208.5L1281.3 763.5" fill="none" stroke="#d9d9d9" stroke-width="1.3"/></svg>
<div style="left:952px;top:849px;width:9.2px;height:9px;background:#4f81bd"></div>
<svg style="left:0;top:0;pointer-events:none" width="1920" height="1030"><text x="674.99" y="604.00" style="font-size:12.600px;font-weight:400;font-style:normal;font-family:'Liberation Sans';fill:#505050;white-space:pre;stroke:#fff;stroke-width:0.2px;">1.2</text><text x="685.50" y="638.80" style="font-size:12.600px;font-weight:400;font-style:normal;font-family:'Liberation Sans';fill:#505050;white-space:pre;stroke:#fff;stroke-width:0.2px;">1</text><text x="674.99" y="672.70" style="font-size:12.600px;font-weight:400;font-style:normal;font-family:'Liberation Sans';fill:#505050;white-space:pre;stroke:#fff;stroke-width:0.2px;">0.8</text><text x="674.99" y="707.50" style="font-size:12.600px;font-weight:400;font-style:normal;font-family:'Liberation Sans';fill:#505050;white-space:pre;stroke:#fff;stroke-width:0.2px;">0.6</text><text x="674.80" y="741.80" style="font-size:12.600px;font-weight:400;font-style:normal;font-family:'Liberation Sans';fill:#505050;white-space:pre;stroke:#fff;stroke-width:0.2px;">0.4</text><text x="674.99" y="776.60" style="font-size:12.600px;font-weight:400;font-style:normal;font-family:'Liberation Sans';fill:#505050;white-space:pre;stroke:#fff;stroke-width:0.2px;">0.2</text><text x="685.31" y="811.20" style="font-size:12.600px;font-weight:400;font-style:normal;font-family:'Liberation Sans';fill:#505050;white-space:pre;stroke:#fff;stroke-width:0.2px;">0</text><text x="927.98" y="532.50" style="font-size:21.703px;font-weight:400;font-style:normal;font-family:'Liberation Sans';fill:#505050;white-space:pre;stroke:#fff;stroke-width:0.3px;">Chart Title</text><text x="963.39" y="860.00" style="font-size:13.227px;font-weight:400;font-style:normal;font-family:'Liberation Sans';fill:#505050;white-space:pre;stroke:#fff;stroke-width:0.2px;">Series1</text></svg>
<div style="left:1481px;top:175px;width:439px;height:824px;background:#f8f8f8;border-left:1px solid #dadada;border-top:1px solid #e6e6e6"></div>
<div style="left:1916px;top:175px;width:4px;height:824px;background:#ececec"></div>
<div style="left:1491px;top:177px;width:190px;height:62px;border:6px solid #ee0b0b;box-shadow:2px 3px 4px rgba(0,0,0,0.35), inset 2px 3px 4px rgba(0,0,0,0.22)"></div>
<svg style="left:0px;top:0px;" width="1" height="1" viewBox="0 0 1 1"><path d="M1876 200L1888 212M1888 200L1876 212" stroke="#5a5a5a" stroke-width="1.4"/></svg>
<div style="left:1483px;top:277.8px;width:429px;height:1.2px;background:#cfcfcf"></div>
<div style="left:1592px;top:275px;width:121px;height:3.6px;background:#1f6e4e"></div>
<svg style="left:0px;top:0px;" width="1" height="1" viewBox="0 0 1 1"><path d="M1499 310.9H1507V303.9Z" fill="#707070"/></svg>
<svg style="left:0px;top:0px;" width="1" height="1" viewBox="0 0 1 1"><path d="M1499 545.7H1507V538.7Z" fill="#707070"/></svg>
<svg style="left:0px;top:0px;" width="1" height="1" viewBox="0 0 1 1"><path d="M1499 643.5H1507V636.5Z" fill="#707070"/></svg>
<svg style="left:0px;top:0px;" width="1" height="1" viewBox="0 0 1 1"><path d="M1499 744.5H1507V737.5Z" fill="#707070"/></svg>
<svg style="left:0px;top:0px;" width="1" height="1" viewBox="0 0 1 1"><g transform="translate(1523.2 339.2)"><rect x="0.6" y="0.6" width="73.8" height="73.8" fill="#fff" stroke="#6f6f6f" stroke-width="1.3"/><rect x="14" y="2.5" width="45" height="5" fill="#b9b9b9"/><path d="M11 13.9H56" stroke="#9a9a9a" stroke-width="0.9"/><path d="M11 27.1H56" stroke="#9a9a9a" stroke-width="0.9"/><path d="M11 39.1H56" stroke="#9a9a9a" stroke-width="0.9"/><path d="M11 52.1H56" stroke="#9a9a9a" stroke-width="0.9"/><path d="M11 13V65.4H56" stroke="#9a9a9a" stroke-width="0.9" fill="none"/><rect x="15" y="37.2" width="7" height="28.200000000000003" fill="#fff" stroke="#777" stroke-width="1"/><rect x="22" y="24" width="7.5" height="41.400000000000006" fill="#bdbdbd" stroke="#777" stroke-width="1"/><rect x="38" y="32.2" width="7.299999999999997" height="33.2" fill="#fff" stroke="#777" stroke-width="1"/><rect x="45.3" y="41.9" width="6.100000000000001" height="23.500000000000007" fill="#bdbdbd" stroke="#777" stroke-width="1"/><rect x="59.2" y="36.2" width="11.3" height="13" fill="#fff" stroke="#777" stroke-width="1"/><path d="M61.5 39.5h1.5M61.5 42.7h1.5M61.5 46h1.5M64.5 40h4M64.5 43h4M64.5 46.3h4" stroke="#777" stroke-width="1.2"/><path d="M15 68.1H25M33 68.1H43" stroke="#bbb" stroke-width="0.8"/></g><g transform="translate(1608.25 339.2)"><rect x="0.6" y="0.6" width="73.8" height="73.8" fill="#fff" stroke="#6f6f6f" stroke-width="1.3"/><rect x="14" y="2.5" width="44.7" height="5" fill="#b9b9b9"/><rect x="20.2" y="13.9" width="33.2" height="6.3" fill="#fff" stroke="#777" stroke-width="1"/><path d="M23 17h2M31 17h2M39 17h2M25.5 18h2M33.5 18h2M41.5 18h2" stroke="#888" stroke-width="1.5"/><rect x="9.8" y="44.2" width="10.399999999999999" height="22.700000000000003" fill="#fff" stroke="#777" stroke-width="1"/><rect x="20.2" y="34" width="10.100000000000001" height="32.900000000000006" fill="#bdbdbd" stroke="#777" stroke-width="1"/><rect x="43" y="40.1" width="10.399999999999999" height="26.800000000000004" fill="#fff" stroke="#777" stroke-width="1"/><rect x="53.4" y="48" width="10.100000000000001" height="18.900000000000006" fill="#bdbdbd" stroke="#777" stroke-width="1"/><path d="M9.8 40.1H20.2M20.2 30H30.3M43 36.2H53.4M53.4 44.2H63.5" stroke="#777" stroke-width="1"/><path d="M3.5 66.9H71" stroke="#999" stroke-width="0.9"/><path d="M11 69.4H20M30 69.4H39" stroke="#bbb" stroke-width="0.8"/></g><g transform="translate(1693.3 339.2)"><rect x="0.6" y="0.6" width="73.8" height="73.8" fill="#fff" stroke="#6f6f6f" stroke-width="1.3"/><rect x="13.7" y="2.85" width="45" height="4.7" fill="#b9b9b9"/><path d="M9.9 13.1H70" stroke="#9a9a9a" stroke-width="0.9"/><path d="M9.9 24.2H70" stroke="#9a9a9a" stroke-width="0.9"/><path d="M9.9 35.2H70" stroke="#9a9a9a" stroke-width="0.9"/><path d="M9.9 45.2H70" stroke="#9a9a9a" stroke-width="0.9"/><path d="M9.9 13V56.1H70" stroke="#9a9a9a" stroke-width="0.9" fill="none"/><rect x="16" y="32.1" width="9.3" height="24.0" fill="#fff" stroke="#777" stroke-width="1"/><rect x="25.3" y="22" width="9.099999999999998" height="34.1" fill="#bdbdbd" stroke="#777" stroke-width="1"/><rect x="46" y="28.1" width="9.399999999999999" height="28.0" fill="#fff" stroke="#777" stroke-width="1"/><rect x="55.4" y="37" width="9.000000000000007" height="19.1" fill="#bdbdbd" stroke="#777" stroke-width="1"/><rect x="19.9" y="64" width="33.4" height="6.4" fill="#fff" stroke="#777" stroke-width="1"/><path d="M23 67h2M31 67h2M39 67h2M25.5 68h2M33.5 68h2M41.5 68h2" stroke="#888" stroke-width="1.5"/></g><g transform="translate(1778.35 339.2)"><rect x="0.6" y="0.6" width="73.8" height="73.8" fill="#fff" stroke="#6f6f6f" stroke-width="1.3"/><path d="M10.2 13.3V56.1H69.6" stroke="#9a9a9a" stroke-width="0.9" fill="none"/><rect x="16" y="32.1" width="9.100000000000001" height="24.0" fill="#fff" stroke="#777" stroke-width="1"/><rect x="25.1" y="22" width="9.299999999999997" height="34.1" fill="#bdbdbd" stroke="#777" stroke-width="1"/><rect x="46.1" y="28.1" width="9.100000000000001" height="28.0" fill="#fff" stroke="#777" stroke-width="1"/><rect x="55.2" y="37" width="9.299999999999997" height="19.1" fill="#bdbdbd" stroke="#777" stroke-width="1"/><path d="M16 28.1H25M24.8 17.1H34.6M46.1 24.1H55.4M55.2 32.1H64.5" stroke="#777" stroke-width="1"/><rect x="20" y="64" width="33.4" height="6.4" fill="#fff" stroke="#777" stroke-width="1"/><path d="M23 67h2M31 67h2M39 67h2M25.5 68h2M33.5 68h2M41.5 68h2" stroke="#888" stroke-width="1.5"/></g><g transform="translate(1523.2 424.3)"><rect x="0.6" y="0.6" width="73.8" height="73.8" fill="#fff" stroke="#6f6f6f" stroke-width="1.3"/><rect x="13.7" y="2.85" width="45" height="4.7" fill="#b9b9b9"/><path d="M9.9 14H70" stroke="#9a9a9a" stroke-width="0.9"/><path d="M9.9 27.2H70" stroke="#9a9a9a" stroke-width="0.9"/><path d="M9.9 39H70" stroke="#9a9a9a" stroke-width="0.9"/><path d="M9.9 52.1H70" stroke="#9a9a9a" stroke-width="0.9"/><path d="M9.9 14V65.3H70" stroke="#9a9a9a" stroke-width="0.9" fill="none"/><rect x="16" y="37" width="9.100000000000001" height="28.299999999999997" fill="#fff" stroke="#777" stroke-width="1"/><rect x="25.1" y="23.9" width="9.299999999999997" height="41.4" fill="#bdbdbd" stroke="#777" stroke-width="1"/><rect x="46" y="32.1" width="9.399999999999999" height="33.199999999999996" fill="#fff" stroke="#777" stroke-width="1"/><rect x="55.4" y="42.1" width="9.000000000000007" height="23.199999999999996" fill="#bdbdbd" stroke="#777" stroke-width="1"/><path d="M16 68H25M40 68H49" stroke="#bbb" stroke-width="0.8"/></g><g transform="translate(1608.25 424.3)"><rect x="0.6" y="0.6" width="73.8" height="73.8" fill="#fff" stroke="#6f6f6f" stroke-width="1.3"/><path d="M11.1 14H55.7" stroke="#9a9a9a" stroke-width="0.9"/><path d="M11.1 27.2H55.7" stroke="#9a9a9a" stroke-width="0.9"/><path d="M11.1 39H55.7" stroke="#9a9a9a" stroke-width="0.9"/><path d="M11.1 52.1H55.7" stroke="#9a9a9a" stroke-width="0.9"/><path d="M11.1 20.2H55.7" stroke="#9a9a9a" stroke-width="0.9" stroke-dasharray="2.5 2"/><path d="M11.1 33.2H55.7" stroke="#9a9a9a" stroke-width="0.9" stroke-dasharray="2.5 2"/><path d="M11.1 46.1H55.7" stroke="#9a9a9a" stroke-width="0.9" stroke-dasharray="2.5 2"/><path d="M11.1 58H55.7" stroke="#9a9a9a" stroke-width="0.9" stroke-dasharray="2.5 2"/><path d="M11.1 14V65.3H55.7" stroke="#9a9a9a" stroke-width="0.9" fill="none"/><rect x="15.1" y="37" width="7.1" height="28.299999999999997" fill="#fff" stroke="#777" stroke-width="1"/><rect x="22.2" y="23.9" width="7.300000000000001" height="41.4" fill="#bdbdbd" stroke="#777" stroke-width="1"/><rect x="38.1" y="32.1" width="7.100000000000001" height="33.199999999999996" fill="#fff" stroke="#777" stroke-width="1"/><rect x="45.2" y="42.1" width="6.199999999999996" height="23.199999999999996" fill="#bdbdbd" stroke="#777" stroke-width="1"/><rect x="58.9" y="35.9" width="11.6" height="13.4" fill="#fff" stroke="#777" stroke-width="1"/><path d="M61.5 39.5h1.5M61.5 42.7h1.5M61.5 46h1.5M64.5 40h4M64.5 43h4M64.5 46.3h4" stroke="#777" stroke-width="1.2"/><path d="M15 68H24M33 68H42" stroke="#bbb" stroke-width="0.8"/></g><g transform="translate(1693.3 424.3)"><rect x="0.6" y="0.6" width="73.8" height="73.8" fill="#fff" stroke="#6f6f6f" stroke-width="1.3"/><rect x="13.7" y="2.85" width="45" height="4.7" fill="#b9b9b9"/><path d="M9.9 14V65.3H70" stroke="#9a9a9a" stroke-width="0.9" fill="none"/><rect x="16" y="37" width="9.100000000000001" height="28.299999999999997" fill="#fff" stroke="#777" stroke-width="1"/><rect x="25.1" y="23.9" width="9.299999999999997" height="41.4" fill="#bdbdbd" stroke="#777" stroke-width="1"/><rect x="46" y="32.1" width="9.399999999999999" height="33.199999999999996" fill="#fff" stroke="#777" stroke-width="1"/><rect x="55.4" y="42.1" width="9.000000000000007" height="23.199999999999996" fill="#bdbdbd" stroke="#777" stroke-width="1"/><path d="M16 68H25M40 68H49" stroke="#bbb" stroke-width="0.8"/></g><g transform="translate(1778.35 424.3)"><rect x="0.6" y="0.6" width="73.8" height="73.8" fill="#fff" stroke="#6f6f6f" stroke-width="1.3"/><path d="M11.1 14H55.7" stroke="#9a9a9a" stroke-width="0.9"/><path d="M11.1 27.2H55.7" stroke="#9a9a9a" stroke-width="0.9"/><path d="M11.1 39H55.7" stroke="#9a9a9a" stroke-width="0.9"/><path d="M11.1 52.1H55.7" stroke="#9a9a9a" stroke-width="0.9"/><path d="M11.1 14V65.3H55.7" stroke="#9a9a9a" stroke-width="0.9" fill="none"/><rect x="15.1" y="37" width="7.1" height="28.299999999999997" fill="#fff" stroke="#777" stroke-width="1"/><rect x="22.2" y="23.9" width="7.300000000000001" height="41.4" fill="#bdbdbd" stroke="#777" stroke-width="1"/><rect x="38.1" y="32.1" width="7.100000000000001" height="33.199999999999996" fill="#fff" stroke="#777" stroke-width="1"/><rect x="45.2" y="42.1" width="6.199999999999996" height="23.199999999999996" fill="#bdbdbd" stroke="#777" stroke-width="1"/><rect x="58.9" y="35.9" width="11.6" height="13.4" fill="#fff" stroke="#777" stroke-width="1"/><path d="M61.5 39.5h1.5M61.5 42.7h1.5M61.5 46h1.5M64.5 40h4M64.5 43h4M64.5 46.3h4" stroke="#777" stroke-width="1.2"/><path d="M15 68H24M33 68H42" stroke="#bbb" stroke-width="0.8"/></g></svg>
<div style="left:1518.5px;top:569.3px;width:144px;height:29.2px;background:#fff;border:1px solid #cfcfcf;border-radius:2px"></div>
<svg style="left:1647px;top:580.8px;" width="9.8" height="5.2" viewBox="0 0 9.8 5.2"><path d="M0 0H9.8L4.9 5.2Z" fill="#4a5560"/></svg>
<div style="left:1518.5px;top:664.5px;width:379px;height:33.7px;background:#fff;border:1px solid #d5d5d5;border-radius:2px"></div>
<div style="left:1523px;top:669px;width:59.8px;height:25px;background:#4f81bd"></div>
<div style="left:1582px;top:669px;width:59.8px;height:25px;background:#c0504d"></div>
<div style="left:1641px;top:669px;width:58.8px;height:25px;background:#9bbb59"></div>
<div style="left:1699px;top:669px;width:59.20000000000009px;height:25px;background:#8064a2"></div>
<div style="left:1757.4px;top:669px;width:58.899999999999906px;height:25px;background:#4bacc6"></div>
<div style="left:1815.5px;top:669px;width:57.5px;height:25px;background:#f79646"></div>
<svg style="left:1883px;top:678.8px;" width="10" height="5.2" viewBox="0 0 10 5.2"><path d="M0 0H10L5.0 5.2Z" fill="#4a5560"/></svg>
<div style="left:1518.5px;top:765.7px;width:153.7px;height:83px;background:#fff;border:1px solid #d5d5d5;border-radius:3px"></div>
<svg style="left:0px;top:0px;" width="1" height="1" viewBox="0 0 1 1">
<rect x="1528.8" y="775.8" width="113.4" height="63.4" fill="#fff" stroke="#8a8a8a" stroke-width="1.1"/>
<rect x="1578.5" y="780.3" width="15.5" height="2.4" fill="#d2d2d2"/>
<path d="M1552 786.0H1623M1552 789.2H1623M1552 792.4H1623M1552 795.6H1623M1552 798.8H1623M1552 802.0H1623M1552 805.2H1623M1552 808.4H1623M1552 811.6H1623M1552 814.8H1623M1552 818.0H1623M1552 821.2H1623M1552 824.4H1623" stroke="#f0f0f0" stroke-width="0.8"/>
<path d="M1538.5 791.8H1541M1538.5 795.3H1541M1538.5 798.8H1541M1538.5 802.3H1541M1538.5 805.8H1541M1538.5 809.3H1541M1538.5 812.8H1541M1538.5 816.3H1541M1538.5 819.8H1541M1538.5 823.3H1541M1538.5 826.8H1541M1538.5 830.3H1541" stroke="#c0c0c0" stroke-width="1.2"/>
<path d="M1542.8 792.5V830.4H1612.3" stroke="#cfcfcf" stroke-width="1.2" fill="none"/>
<path d="M1624.7 810.4H1634.5" stroke="#a8a8a8" stroke-width="1.3"/>
</svg>
<svg style="left:1658.2px;top:805px;" width="9.4" height="5" viewBox="0 0 9.4 5"><path d="M0 0H9.4L4.7 5Z" fill="#4a5560"/></svg>
<svg style="left:0;top:0;pointer-events:none" width="1920" height="1030"><text x="1518.06" y="219.30" style="font-size:20.062px;font-weight:400;font-style:normal;font-family:'Liberation Sans';fill:#2f6f5a;white-space:pre;stroke:#f8f8f8;stroke-width:0.55px;">Chart Editor</text><text x="1518.80" y="265.80" style="font-size:15.339px;font-weight:400;font-style:normal;font-family:'Liberation Sans';fill:#1e1e1e;white-space:pre;stroke:#f8f8f8;stroke-width:0.3px;">Data</text><text x="1591.84" y="265.80" style="font-size:15.366px;font-weight:700;font-style:normal;font-family:'Liberation Sans';fill:#227a55;white-space:pre;">Design &amp; Layout</text><text x="1753.58" y="266.00" style="font-size:15.570px;font-weight:400;font-style:normal;font-family:'Liberation Sans';fill:#1e1e1e;white-space:pre;stroke:#f8f8f8;stroke-width:0.3px;">Elements</text><text x="1517.55" y="313.00" style="font-size:16.019px;font-weight:400;font-style:normal;font-family:'Liberation Sans';fill:#22674f;white-space:pre;stroke:#f8f8f8;stroke-width:0.3px;">Layout</text><text x="1517.58" y="548.40" style="font-size:15.570px;font-weight:400;font-style:normal;font-family:'Liberation Sans';fill:#22674f;white-space:pre;stroke:#f8f8f8;stroke-width:0.3px;">Elements</text><text x="1518.06" y="643.60" style="font-size:15.764px;font-weight:400;font-style:normal;font-family:'Liberation Sans';fill:#22674f;white-space:pre;stroke:#f8f8f8;stroke-width:0.3px;">Color Scheme</text><text x="1518.33" y="745.30" style="font-size:15.200px;font-weight:400;font-style:normal;font-family:'Liberation Sans';fill:#22674f;white-space:pre;stroke:#f8f8f8;stroke-width:0.3px;">Style</text><text x="1551.80" y="589.70" style="font-size:12.824px;font-weight:700;font-style:normal;font-family:'Liberation Sans';fill:#222;white-space:pre;">Elements</text></svg>
<div style="left:0px;top:958px;width:1481px;height:41px;background:#ececec;border-top:1px solid #d5d5d5"></div>
<div style="left:34px;top:954.5px;width:1412px;height:3.5px;background:#ffffff"></div>
<svg style="left:0px;top:0px;" width="1" height="1" viewBox="0 0 1 1">
<g fill="#b0b0b0">
<rect x="18.3" y="973" width="1.4" height="11.4"/><path d="M27.6 973V984.4L20.5 978.7Z"/>
<path d="M51.2 973.5V984L45 978.7Z"/>
<path d="M69.7 973.5V984L75.9 978.7Z"/>
<path d="M93.6 973V984.4L100.7 978.7Z"/><rect x="100.6" y="973" width="1.4" height="11.4"/>
</g></svg>
<div style="left:309.3px;top:957.5px;width:169px;height:35.3px;background:#fff;border:1px solid #d0d0d0;border-top:none;box-shadow:0 1px 1px rgba(0,0,0,0.12)"></div>
<svg style="left:0px;top:0px;" width="1" height="1" viewBox="0 0 1 1"><path d="M509.6 976.5H521.6M515.6 970.9V982.1" stroke="#888" stroke-width="1.5"/></svg>
<svg style="left:0px;top:0px;" width="1" height="1" viewBox="0 0 1 1"><circle cx="864.75" cy="972.7" r="1.9" fill="#a8a8a8"/><circle cx="864.75" cy="978.8" r="1.9" fill="#a8a8a8"/><circle cx="864.75" cy="984.7" r="1.9" fill="#a8a8a8"/></svg>
<svg style="left:0px;top:0px;" width="1" height="1" viewBox="0 0 1 1"><path d="M885.7 979.2L891.6 974.4V984Z" fill="#666"/><path d="M1440 979.2L1434 974.4V984Z" fill="#666"/></svg>
<div style="left:899px;top:971.6px;width:36px;height:15.2px;background:#d6d6d6"></div>
<div style="left:1446px;top:958px;width:35px;height:41px;background:#ececec"></div>
<div style="left:0px;top:999px;width:1920px;height:31px;background:#f3f3f3;border-top:1px solid #dedede"></div>
<svg style="left:0px;top:0px;" width="1" height="1" viewBox="0 0 1 1"><path d="M1767.9 1014H1780.1M1877.8 1014.2H1890M1883.9 1008.3V1020" stroke="#444" stroke-width="1.6"/></svg>
<svg style="left:0;top:0;pointer-events:none" width="1920" height="1030"><text x="126.11" y="983.50" style="font-size:16.477px;font-weight:400;font-style:normal;font-family:'Liberation Sans';fill:#222;white-space:pre;stroke:#ececec;stroke-width:0.3px;">Monthly Budget Report</text><text x="324.61" y="983.50" style="font-size:15.882px;font-weight:700;font-style:normal;font-family:'Liberation Sans';fill:#217356;white-space:pre;">Monthly Expenses</text><text x="19.16" y="1021.00" style="font-size:13.258px;font-weight:400;font-style:normal;font-family:'Liberation Sans';fill:#555;white-space:pre;stroke:#f3f3f3;stroke-width:0.3px;">READY</text><text x="1811.73" y="1019.80" style="font-size:13.872px;font-weight:400;font-style:normal;font-family:'Liberation Sans';fill:#555;white-space:pre;stroke:#f3f3f3;stroke-width:0.3px;">100%</text></svg>
</body></html>
